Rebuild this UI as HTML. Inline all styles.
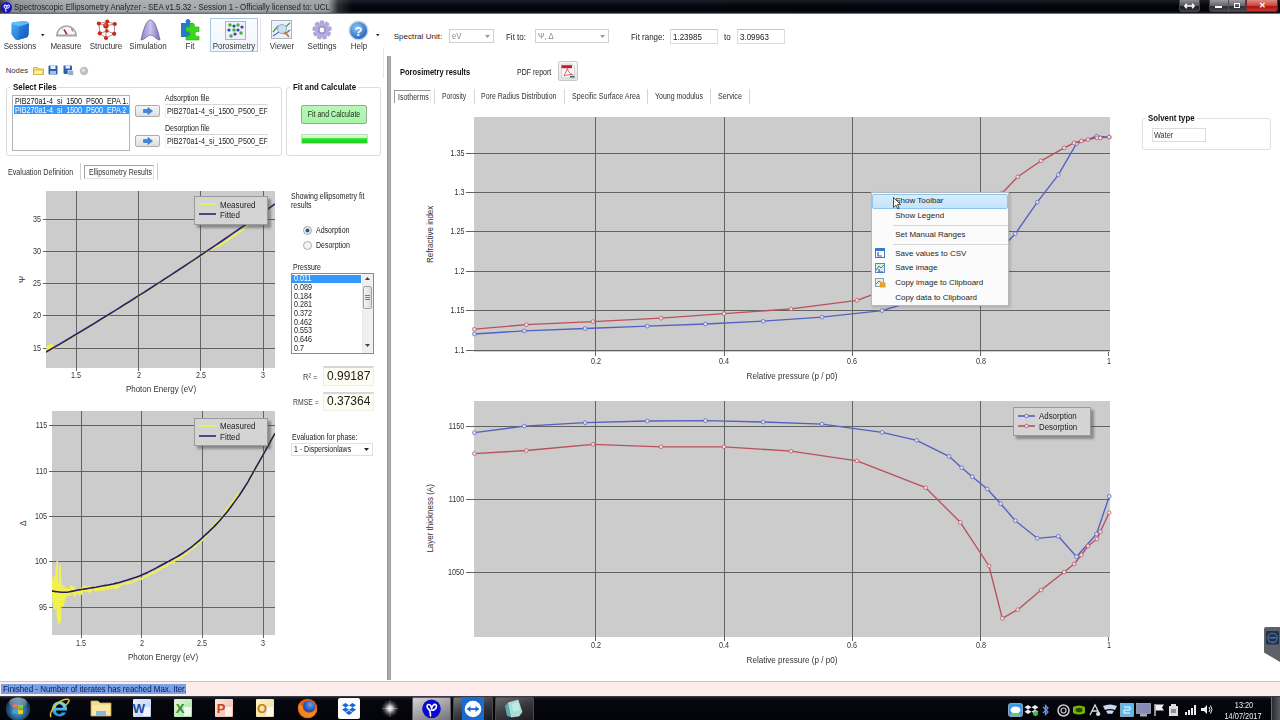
<!DOCTYPE html>
<html><head><meta charset="utf-8"><title>SEA</title>
<style>
html,body{margin:0;padding:0;width:1280px;height:720px;overflow:hidden;background:#fff;}
body{position:relative;font-family:"Liberation Sans",sans-serif;}
.t{position:absolute;white-space:nowrap;font-family:"Liberation Sans",sans-serif;}
.r{position:absolute;}
svg.r{overflow:visible;}
</style></head><body>
<div class="r" style="left:0px;top:0px;width:1280px;height:14px;background:linear-gradient(90deg,#30343a 0px,#8a8e92 12px,#a2a6a8 60px,#a6aaac 220px,#9a9ea0 328px,#2a2c34 338px,#04050f 352px,#02030c 100%);"></div>
<div class="r" style="left:0px;top:0px;width:1280px;height:6px;background:linear-gradient(180deg,rgba(255,255,255,0.10),rgba(255,255,255,0));"></div>
<div class="r" style="left:0px;top:11px;width:1280px;height:3px;background:linear-gradient(180deg,rgba(0,0,0,0),rgba(60,60,66,0.6));"></div>
<div class="r" style="left:0px;top:13px;width:1280px;height:1px;background:#707074;"></div>
<div class="r" style="left:1px;top:1.5px;width:11px;height:11px;border-radius:50%;background:radial-gradient(circle at 50% 45%,#1a18c8 50%,#0c0a90 78%,#6a6ae0);"></div>
<svg class="r" style="left:1px;top:2px" width="11" height="11" viewBox="0 0 11 11"><path d="M5 9.5 C5 7.2 4.7 6.2 3.6 5.4 C2.8 4.7 3 3.3 4 3.1 C5.1 2.9 5.6 4.2 5.6 5.6 C5.9 3.9 6.9 2.8 7.8 3.1 C8.7 3.4 8.6 5 7.3 5.9 C6.7 6.3 5.9 6.3 5.5 6.2" stroke="#f0f0ff" stroke-width="1.1" fill="none" stroke-linecap="round"/></svg>
<div class="t" style="left:14px;transform-origin:0 50%;top:1.53px;font-size:8.61px;line-height:10.33px;color:#1e1e1e;font-weight:400;transform:scaleX(0.9174);">Spectroscopic Ellipsometry Analyzer - SEA v1.5.32 - Session 1 - Officially licensed to: UCL</div>
<div class="r" style="left:1179px;top:0px;width:21px;height:12px;background:linear-gradient(180deg,#8a8a90,#505058 55%,#1a1a22 60%,#3a3a44);border:1px solid #444;border-top:none;border-radius:0 0 3px 3px;box-sizing:border-box;"></div>
<svg class="r" style="left:1184px;top:3px" width="11" height="6"><path d="M0.5 3H10.5M0.5 3L3 0.8M0.5 3L3 5.2M10.5 3L8 0.8M10.5 3L8 5.2" stroke="#fff" stroke-width="1.4" fill="none"/></svg>
<div class="r" style="left:1209px;top:0px;width:37px;height:12px;background:linear-gradient(180deg,#9a9aa0,#606068 55%,#2a2a32 60%,#4a4a54);border:1px solid #444;border-top:none;border-radius:0 0 0 3px;box-sizing:border-box;"></div>
<div class="r" style="left:1228px;top:0px;width:1px;height:12px;background:#555;"></div>
<div class="r" style="left:1215px;top:6px;width:7px;height:2px;background:#fff;"></div>
<div class="r" style="left:1234px;top:3px;width:6px;height:5px;border:1.3px solid #fff;box-sizing:border-box;"></div>
<div class="r" style="left:1246px;top:0px;width:32px;height:12px;background:linear-gradient(180deg,#e08a80,#c84a40 50%,#b01010 60%,#c83a30);border:1px solid #6a2a2a;border-top:none;border-radius:0 0 3px 0;box-sizing:border-box;"></div>
<div class="t" style="left:1062px;width:400px;text-align:center;transform-origin:50% 50%;top:0.70px;font-size:8.00px;line-height:9.60px;color:#fff;font-weight:700;">&#x2715;</div>
<div class="r" style="left:210px;top:18px;width:48px;height:34px;border:1px solid #a9c6e6;background:linear-gradient(180deg,#fbfdff,#eef5fc);box-sizing:border-box;"></div>
<div class="r" style="left:260px;top:18px;width:1px;height:34px;background:#e4e8ee;"></div>
<div class="t" style="left:-180px;width:400px;text-align:center;transform-origin:50% 50%;top:40.52px;font-size:8.64px;line-height:10.37px;color:#333;font-weight:400;transform:scaleX(0.9259);">Sessions</div>
<div class="t" style="left:-133.6px;width:400px;text-align:center;transform-origin:50% 50%;top:40.52px;font-size:8.64px;line-height:10.37px;color:#333;font-weight:400;transform:scaleX(0.9259);">Measure</div>
<div class="t" style="left:-93.7px;width:400px;text-align:center;transform-origin:50% 50%;top:40.52px;font-size:8.64px;line-height:10.37px;color:#333;font-weight:400;transform:scaleX(0.9259);">Structure</div>
<div class="t" style="left:-52.400000000000006px;width:400px;text-align:center;transform-origin:50% 50%;top:40.52px;font-size:8.64px;line-height:10.37px;color:#333;font-weight:400;transform:scaleX(0.9259);">Simulation</div>
<div class="t" style="left:-9.800000000000011px;width:400px;text-align:center;transform-origin:50% 50%;top:40.52px;font-size:8.64px;line-height:10.37px;color:#333;font-weight:400;transform:scaleX(0.9259);">Fit</div>
<div class="t" style="left:34px;width:400px;text-align:center;transform-origin:50% 50%;top:40.52px;font-size:8.64px;line-height:10.37px;color:#333;font-weight:400;transform:scaleX(0.9259);">Porosimetry</div>
<div class="t" style="left:81.60000000000002px;width:400px;text-align:center;transform-origin:50% 50%;top:40.52px;font-size:8.64px;line-height:10.37px;color:#333;font-weight:400;transform:scaleX(0.9259);">Viewer</div>
<div class="t" style="left:121.5px;width:400px;text-align:center;transform-origin:50% 50%;top:40.52px;font-size:8.64px;line-height:10.37px;color:#333;font-weight:400;transform:scaleX(0.9259);">Settings</div>
<div class="t" style="left:158.7px;width:400px;text-align:center;transform-origin:50% 50%;top:40.52px;font-size:8.64px;line-height:10.37px;color:#333;font-weight:400;transform:scaleX(0.9259);">Help</div>
<svg class="r" style="left:41px;top:33.5px" width="4" height="2.5"><path d="M0 0H3.5L1.75 2.2Z" fill="#222"/></svg>
<svg class="r" style="left:376px;top:33.5px" width="4" height="2.5"><path d="M0 0H3.5L1.75 2.2Z" fill="#222"/></svg>
<svg class="r" style="left:10px;top:20px" width="21" height="21" viewBox="0 0 21 21"><defs><linearGradient id="cb1" x1="0" y1="0" x2="1" y2="1"><stop offset="0" stop-color="#4ab0f4"/><stop offset="1" stop-color="#1468d0"/></linearGradient><linearGradient id="cb2" x1="0" y1="0" x2="1" y2="1"><stop offset="0" stop-color="#2a80e0"/><stop offset="1" stop-color="#1050b0"/></linearGradient></defs>
<path d="M1.5 4 Q1.5 2.5 3 2.3 L14 1 Q18.5 1.5 19 3.5 L18.5 15 Q18 16.5 16.5 17.5 L7.5 20 Q6 20.3 5 19 L2 15 Q1.2 14 1.3 12.5 Z" fill="url(#cb1)"/>
<path d="M14.5 4 L19 3.5 L18.5 15 Q18 16.5 16.5 17.5 L8 20 L9 6.5 Z" fill="url(#cb2)" opacity="0.75"/>
<path d="M1.5 4 Q1.5 2.5 3 2.3 L14 1 Q18.5 1.5 19 3.5 L9 6.5 Z" fill="#6ac4fa" opacity="0.8"/></svg>
<svg class="r" style="left:55px;top:22px" width="23" height="15" viewBox="0 0 23 15"><path d="M2 13.5 A9.5 9.5 0 0 1 21 13.5 Z" fill="#fafafa" stroke="#a4a4a4" stroke-width="1.6"/>
<path d="M12 12.5 L9 7.5" stroke="#a02838" stroke-width="1.5"/><path d="M16.5 6.5 L17.8 9.5" stroke="#c04858" stroke-width="1"/><path d="M7 6.5 L8 8" stroke="#d08090" stroke-width="0.8"/>
<rect x="1" y="12.6" width="21" height="1.8" fill="#a8a8a8"/></svg>
<svg class="r" style="left:96px;top:19px" width="22" height="22" viewBox="0 0 22 22"><g stroke="#a08080" stroke-width="0.9" fill="none"><path d="M3 4.5 L11.3 2.6 L18.8 5 L18.2 14.8 L10 19 L3.8 14.3 Z M3 4.5 L9.9 6.8 L18.8 5 M9.9 6.8 L10 19 M3.8 14.3 L10.9 12 L18.2 14.8 M11.3 2.6 L10.9 12"/></g>
<g fill="#c82818"><circle cx="2.9" cy="4.5" r="2.1"/><circle cx="11.3" cy="2.6" r="2"/><circle cx="18.8" cy="5" r="2.1"/><circle cx="18.2" cy="14.8" r="2.1"/><circle cx="10" cy="19" r="2.1"/><circle cx="3.8" cy="14.3" r="2.1"/><circle cx="10.9" cy="12" r="1.7"/></g><circle cx="9.9" cy="6.8" r="2.7" fill="#e02010"/><circle cx="9.3" cy="6" r="0.9" fill="#f87060"/></svg>
<svg class="r" style="left:140px;top:19px" width="21" height="22" viewBox="0 0 21 22"><defs><linearGradient id="sg1" x1="0" y1="0" x2="1" y2="0"><stop offset="0" stop-color="#8a82c8"/><stop offset="0.5" stop-color="#c8c4ec"/><stop offset="1" stop-color="#7a70b8"/></linearGradient></defs>
<path d="M1 21 C3 12 6 1 10.5 1 C15 1 18 12 20 21 C16 21 14 16 10.5 16 C7 16 5 21 1 21 Z" fill="url(#sg1)" stroke="#6a62a8" stroke-width="0.8"/></svg>
<svg class="r" style="left:179px;top:19px" width="22" height="22" viewBox="0 0 22 22"><path d="M2 4 h5 a2.5 2.5 0 1 1 4 0 h2 v14 h-11 Z" fill="#2a78c8"/>
<path d="M7 8 h4 a2.5 2.5 0 1 1 4 0 h5 v5 a2.5 2.5 0 1 0 0 4 v4 h-13 v-4 a2.5 2.5 0 1 0 0 -4 Z" fill="#3ad818" stroke="#28a810" stroke-width="0.6"/></svg>
<svg class="r" style="left:225px;top:21px" width="21" height="19" viewBox="0 0 21 19"><rect x="0.5" y="0.5" width="20" height="18" fill="#f0eef6" stroke="#b8b0c8"/>
<g fill="#40b040"><circle cx="5" cy="4" r="1.7"/><circle cx="13" cy="4" r="1.7"/><circle cx="9" cy="9" r="1.7"/><circle cx="16" cy="12" r="1.7"/><circle cx="6" cy="15" r="1.7"/></g>
<g fill="#2a4aa8"><circle cx="9" cy="5" r="1.6"/><circle cx="17" cy="6" r="1.6"/><circle cx="4" cy="9" r="1.6"/><circle cx="13" cy="9" r="1.6"/><circle cx="10" cy="13" r="1.6"/></g></svg>
<svg class="r" style="left:271px;top:20px" width="22" height="20" viewBox="0 0 22 20"><rect x="0.5" y="0.5" width="20" height="18" fill="#eef2f6" stroke="#a8b4c4"/>
<path d="M2 12 L7 6 L12 9 L19 3" stroke="#40a040" stroke-width="1.3" fill="none"/><path d="M2 16 L8 12 L14 14 L19 10" stroke="#4060c0" stroke-width="1.1" fill="none"/>
<circle cx="11" cy="9" r="4.5" fill="#c8e0f0" stroke="#90b0c8" stroke-width="1"/><path d="M14 12 L18 17" stroke="#e07820" stroke-width="2"/></svg>
<svg class="r" style="left:312px;top:20px" width="20" height="20" viewBox="0 0 20 20"><rect x="7.7" y="0.40000000000000036" width="4.6" height="5" rx="1.2" fill="#b0a8dc" transform="rotate(0 10 10)"/><rect x="7.7" y="0.40000000000000036" width="4.6" height="5" rx="1.2" fill="#b0a8dc" transform="rotate(40 10 10)"/><rect x="7.7" y="0.40000000000000036" width="4.6" height="5" rx="1.2" fill="#b0a8dc" transform="rotate(80 10 10)"/><rect x="7.7" y="0.40000000000000036" width="4.6" height="5" rx="1.2" fill="#b0a8dc" transform="rotate(120 10 10)"/><rect x="7.7" y="0.40000000000000036" width="4.6" height="5" rx="1.2" fill="#b0a8dc" transform="rotate(160 10 10)"/><rect x="7.7" y="0.40000000000000036" width="4.6" height="5" rx="1.2" fill="#b0a8dc" transform="rotate(200 10 10)"/><rect x="7.7" y="0.40000000000000036" width="4.6" height="5" rx="1.2" fill="#b0a8dc" transform="rotate(240 10 10)"/><rect x="7.7" y="0.40000000000000036" width="4.6" height="5" rx="1.2" fill="#b0a8dc" transform="rotate(280 10 10)"/><rect x="7.7" y="0.40000000000000036" width="4.6" height="5" rx="1.2" fill="#b0a8dc" transform="rotate(320 10 10)"/><circle cx="10" cy="10" r="6.8" fill="#b4acde"/><circle cx="10" cy="10" r="4.2" fill="#9a90cc"/><circle cx="10" cy="10" r="2.4" fill="#fff"/></svg>
<svg class="r" style="left:348px;top:20px" width="21" height="21" viewBox="0 0 21 21"><defs><radialGradient id="hg1" cx="0.4" cy="0.35" r="0.7"><stop offset="0" stop-color="#8cc8f8"/><stop offset="1" stop-color="#1a5ab8"/></radialGradient></defs>
<circle cx="10.5" cy="10.5" r="9.3" fill="url(#hg1)" stroke="#c8d4e0" stroke-width="1.4"/>
<text x="10.5" y="15.5" font-family="Liberation Sans" font-weight="700" font-size="13" fill="#fff" text-anchor="middle">?</text></svg>
<div class="t" style="left:393.7px;transform-origin:0 50%;top:31.80px;font-size:8.00px;line-height:9.60px;color:#222;font-weight:400;letter-spacing:0.05px">Spectral Unit:</div>
<div class="r" style="left:449px;top:29px;width:45px;height:14px;border:1px solid #d0d0d0;background:#fff;box-sizing:border-box;"></div><div class="t" style="left:452px;transform-origin:0 50%;top:31.45px;font-size:8.58px;line-height:10.30px;color:#8a8a8a;font-weight:400;transform:scaleX(0.9091);">eV</div><svg class="r" style="left:485px;top:34.5px" width="5" height="3"><path d="M0 0H5L2.5 3Z" fill="#999"/></svg>
<div class="t" style="left:506px;transform-origin:0 50%;top:31.56px;font-size:8.40px;line-height:10.08px;color:#222;font-weight:400;transform:scaleX(0.9524);">Fit to:</div>
<div class="r" style="left:535px;top:29px;width:74px;height:14px;border:1px solid #d0d0d0;background:#fff;box-sizing:border-box;"></div><div class="t" style="left:538px;transform-origin:0 50%;top:31.45px;font-size:8.58px;line-height:10.30px;color:#8a8a8a;font-weight:400;transform:scaleX(0.9091);">&#936;, &#916;</div><svg class="r" style="left:600px;top:34.5px" width="5" height="3"><path d="M0 0H5L2.5 3Z" fill="#999"/></svg>
<div class="t" style="left:631px;transform-origin:0 50%;top:31.56px;font-size:8.40px;line-height:10.08px;color:#222;font-weight:400;transform:scaleX(0.9524);">Fit range:</div>
<div class="r" style="left:670px;top:29px;width:48px;height:15px;border:1px solid #dcdcdc;border-top-color:#c4c4c4;background:#fff;box-sizing:border-box;"></div>
<div class="t" style="left:673px;transform-origin:0 50%;top:31.52px;font-size:8.80px;line-height:10.56px;color:#222;font-weight:400;transform:scaleX(0.9091);">1.23985</div>
<div class="t" style="left:724px;transform-origin:0 50%;top:31.56px;font-size:8.40px;line-height:10.08px;color:#222;font-weight:400;transform:scaleX(0.9524);">to</div>
<div class="r" style="left:737px;top:29px;width:48px;height:15px;border:1px solid #dcdcdc;border-top-color:#c4c4c4;background:#fff;box-sizing:border-box;"></div>
<div class="t" style="left:740px;transform-origin:0 50%;top:31.52px;font-size:8.80px;line-height:10.56px;color:#222;font-weight:400;transform:scaleX(0.9091);">3.09963</div>
<div class="r" style="left:387px;top:56px;width:4px;height:624px;background:linear-gradient(90deg,#8a8a8a,#b4b4b4 50%,#9a9a9a);"></div>
<div class="r" style="left:383px;top:48px;width:1px;height:30px;background:#e6e6e6;"></div>
<div class="t" style="left:5.8px;transform-origin:0 50%;top:66.38px;font-size:7.70px;line-height:9.24px;color:#333;font-weight:400;">Nodes</div>
<svg class="r" style="left:33px;top:65px" width="11" height="10" viewBox="0 0 11 10"><path d="M0.5 2.5 h4 l1 1.5 h5 v5.5 h-10 Z" fill="#f8e060" stroke="#c8a830" stroke-width="0.8"/><path d="M1.5 5 h9 l-1 4.5 h-9 Z" fill="#fff0a0" stroke="#c8a830" stroke-width="0.6"/></svg>
<svg class="r" style="left:48px;top:65px" width="10" height="10" viewBox="0 0 10 10"><rect x="0.5" y="0.5" width="9" height="9" rx="1" fill="#2a60b0"/><rect x="2.5" y="0.5" width="5" height="3.5" fill="#e8f0f8"/><rect x="2" y="6" width="6" height="3.5" fill="#a8c0e0"/></svg>
<svg class="r" style="left:63px;top:65px" width="11" height="11" viewBox="0 0 11 11"><rect x="0.5" y="0.5" width="8.5" height="8.5" rx="1" fill="#2a60b0"/><rect x="2.5" y="0.5" width="4.5" height="3" fill="#e8f0f8"/><rect x="5" y="5.5" width="5.5" height="5" fill="#9aaac8" stroke="#fff" stroke-width="0.6"/></svg>
<svg class="r" style="left:79px;top:66px" width="10" height="10" viewBox="0 0 10 10"><circle cx="5" cy="5" r="4.2" fill="#c0c0c0"/><circle cx="4.3" cy="4.3" r="1.8" fill="#e0e0e0"/></svg>
<div class="r" style="left:6px;top:87px;width:276px;height:69px;border:1px solid #dcdcdc;border-radius:3px;box-sizing:border-box;"></div>
<div class="r" style="left:10px;top:82px;width:48px;height:9px;background:#fff;"></div>
<div class="t" style="left:12.5px;transform-origin:0 50%;top:82.05px;font-size:8.59px;line-height:10.30px;color:#111;font-weight:700;transform:scaleX(0.9259);">Select Files</div>
<div class="r" style="left:12px;top:95px;width:118px;height:56px;border:1px solid #b4b4b4;background:#fff;box-sizing:border-box;"></div>
<div class="t" style="left:15px;transform-origin:0 50%;top:95.73px;font-size:8.78px;line-height:10.54px;color:#111;font-weight:400;transform:scaleX(0.8197);width:139px;height:14px;overflow:hidden">PIB270a1-4_si_1500_P500_EPA 1.</div>
<div class="r" style="left:14px;top:105px;width:115px;height:9px;background:#3399ff;"></div>
<div class="t" style="left:15px;transform-origin:0 50%;top:104.73px;font-size:8.78px;line-height:10.54px;color:#fff;font-weight:400;transform:scaleX(0.8197);width:139px;height:14px;overflow:hidden">PIB270a1-4_si_1500_P500_EPA 2</div>
<div class="r" style="left:135px;top:105px;width:25px;height:12px;border:1px solid #acacac;border-radius:2px;background:linear-gradient(180deg,#f6f6f6,#dedede);box-sizing:border-box;"></div><svg class="r" style="left:142.5px;top:107.0px" width="10" height="8" viewBox="0 0 10 8"><path d="M0.5 2.5 H5 V0.5 L9.5 4 L5 7.5 V5.5 H0.5 Z" fill="#3c8ae0" stroke="#2a68b8" stroke-width="0.6"/></svg>
<div class="r" style="left:135px;top:135px;width:25px;height:12px;border:1px solid #acacac;border-radius:2px;background:linear-gradient(180deg,#f6f6f6,#dedede);box-sizing:border-box;"></div><svg class="r" style="left:142.5px;top:137.0px" width="10" height="8" viewBox="0 0 10 8"><path d="M0.5 2.5 H5 V0.5 L9.5 4 L5 7.5 V5.5 H0.5 Z" fill="#3c8ae0" stroke="#2a68b8" stroke-width="0.6"/></svg>
<div class="t" style="left:164.7px;transform-origin:0 50%;top:92.88px;font-size:8.54px;line-height:10.25px;color:#222;font-weight:400;transform:scaleX(0.8197);">Adsorption file</div>
<div class="r" style="left:165px;top:104px;width:103px;height:14px;border:1px solid #f0f0f0;border-top-color:#d8d8d8;background:#fff;box-sizing:border-box;"></div>
<div class="t" style="left:167px;transform-origin:0 50%;top:106.23px;font-size:8.78px;line-height:10.54px;color:#222;font-weight:400;transform:scaleX(0.8197);width:122px;height:14px;overflow:hidden">PIB270a1-4_si_1500_P500_EF</div>
<div class="t" style="left:164.7px;transform-origin:0 50%;top:123.18px;font-size:8.54px;line-height:10.25px;color:#222;font-weight:400;transform:scaleX(0.8197);">Desorption file</div>
<div class="r" style="left:165px;top:134px;width:103px;height:14px;border:1px solid #f0f0f0;border-top-color:#d8d8d8;background:#fff;box-sizing:border-box;"></div>
<div class="t" style="left:167px;transform-origin:0 50%;top:135.73px;font-size:8.78px;line-height:10.54px;color:#222;font-weight:400;transform:scaleX(0.8197);width:122px;height:14px;overflow:hidden">PIB270a1-4_si_1500_P500_EF</div>
<div class="r" style="left:286px;top:87px;width:95px;height:69px;border:1px solid #dcdcdc;border-radius:3px;box-sizing:border-box;"></div>
<div class="r" style="left:290px;top:82px;width:68px;height:9px;background:#fff;"></div>
<div class="t" style="left:292.5px;transform-origin:0 50%;top:82.08px;font-size:8.53px;line-height:10.24px;color:#111;font-weight:700;transform:scaleX(0.9259);">Fit and Calculate</div>
<div class="r" style="left:301px;top:105px;width:66px;height:19px;border:1px solid #9aa89a;border-radius:2px;background:linear-gradient(180deg,#b8f8b8,#a8f4a8);box-sizing:border-box;"></div>
<div class="t" style="left:134px;width:400px;text-align:center;transform-origin:50% 50%;top:109.18px;font-size:8.54px;line-height:10.25px;color:#1a2a1a;font-weight:400;transform:scaleX(0.8197);">Fit and Calculate</div>
<div class="r" style="left:301px;top:134px;width:67px;height:10px;border:1px solid #b8dcb8;border-radius:1px;background:linear-gradient(180deg,#e4fce4,#c0f4c0 40%,#28e028 45%,#18e018 80%,#30c030);box-sizing:border-box;"></div>
<div class="t" style="left:8.4px;transform-origin:0 50%;top:166.97px;font-size:8.72px;line-height:10.47px;color:#333;font-weight:400;transform:scaleX(0.8197);">Evaluation Definition</div>
<div class="r" style="left:80px;top:163px;width:1px;height:17px;background:#d0d0d0;"></div>
<div class="r" style="left:84px;top:165px;width:70px;height:14px;border:1px solid #a0a0a0;border-bottom-color:#e4e4e4;border-right-color:#e4e4e4;box-sizing:border-box;background:#fff;"></div>
<div class="t" style="left:88.8px;transform-origin:0 50%;top:167.31px;font-size:8.48px;line-height:10.17px;color:#333;font-weight:400;transform:scaleX(0.8197);">Ellipsometry Results</div>
<div class="r" style="left:157px;top:163px;width:1px;height:17px;background:#d0d0d0;"></div>
<div class="r" style="left:46px;top:191px;width:229px;height:177px;background:#cccccc;"></div><svg class="r" style="left:0;top:0" width="1280" height="720"><line x1="76.5" y1="191" x2="76.5" y2="368" stroke="#636363" stroke-width="1"/><line x1="76.5" y1="368" x2="76.5" y2="371" stroke="#636363" stroke-width="1"/><line x1="138.5" y1="191" x2="138.5" y2="368" stroke="#636363" stroke-width="1"/><line x1="138.5" y1="368" x2="138.5" y2="371" stroke="#636363" stroke-width="1"/><line x1="200.5" y1="191" x2="200.5" y2="368" stroke="#636363" stroke-width="1"/><line x1="200.5" y1="368" x2="200.5" y2="371" stroke="#636363" stroke-width="1"/><line x1="263.5" y1="191" x2="263.5" y2="368" stroke="#636363" stroke-width="1"/><line x1="263.5" y1="368" x2="263.5" y2="371" stroke="#636363" stroke-width="1"/><line x1="43" y1="219.5" x2="275" y2="219.5" stroke="#636363" stroke-width="1"/><line x1="43" y1="251.5" x2="275" y2="251.5" stroke="#636363" stroke-width="1"/><line x1="43" y1="283.5" x2="275" y2="283.5" stroke="#636363" stroke-width="1"/><line x1="43" y1="315.5" x2="275" y2="315.5" stroke="#636363" stroke-width="1"/><line x1="43" y1="348.5" x2="275" y2="348.5" stroke="#636363" stroke-width="1"/></svg><div class="t" style="left:-123.7px;width:400px;text-align:center;transform-origin:50% 50%;top:370.10px;font-size:9.00px;line-height:10.80px;color:#333;font-weight:400;transform:scaleX(0.8000);">1.5</div><div class="t" style="left:-61.435px;width:400px;text-align:center;transform-origin:50% 50%;top:370.10px;font-size:9.00px;line-height:10.80px;color:#333;font-weight:400;transform:scaleX(0.8000);">2</div><div class="t" style="left:0.8299999999999841px;width:400px;text-align:center;transform-origin:50% 50%;top:370.10px;font-size:9.00px;line-height:10.80px;color:#333;font-weight:400;transform:scaleX(0.8000);">2.5</div><div class="t" style="left:63.09500000000003px;width:400px;text-align:center;transform-origin:50% 50%;top:370.10px;font-size:9.00px;line-height:10.80px;color:#333;font-weight:400;transform:scaleX(0.8000);">3</div><div class="t" style="right:1239px;transform-origin:100% 50%;top:214.00px;font-size:9.00px;line-height:10.80px;color:#333;font-weight:400;transform:scaleX(0.8000);">35</div><div class="t" style="right:1239px;transform-origin:100% 50%;top:246.15px;font-size:9.00px;line-height:10.80px;color:#333;font-weight:400;transform:scaleX(0.8000);">30</div><div class="t" style="right:1239px;transform-origin:100% 50%;top:278.30px;font-size:9.00px;line-height:10.80px;color:#333;font-weight:400;transform:scaleX(0.8000);">25</div><div class="t" style="right:1239px;transform-origin:100% 50%;top:310.45px;font-size:9.00px;line-height:10.80px;color:#333;font-weight:400;transform:scaleX(0.8000);">20</div><div class="t" style="right:1239px;transform-origin:100% 50%;top:342.60px;font-size:9.00px;line-height:10.80px;color:#333;font-weight:400;transform:scaleX(0.8000);">15</div>
<svg class="r" style="left:0;top:0" width="1280" height="720"><defs><clipPath id="cl1"><rect x="46" y="191" width="229" height="177"/></clipPath></defs><g clip-path="url(#cl1)"><polyline points="45.0,353.1 47.5,351.7 50.0,350.2 52.5,348.8 55.0,347.3 57.5,345.8 60.0,344.4 62.5,342.9 65.0,341.4 67.5,339.9 70.0,338.4 72.5,336.9 75.0,335.4 77.5,334.0 80.0,332.5 82.5,330.9 85.0,329.4 87.5,327.9 90.0,326.4 92.5,324.9 95.0,323.4 97.5,321.8 100.0,320.3 102.5,318.8 105.0,317.3 107.5,315.7 110.0,314.2 112.5,312.6 115.0,311.1 117.5,309.5 120.0,308.0 122.5,306.4 125.0,304.8 127.5,303.3 130.0,301.7 132.5,300.1 135.0,298.5 137.5,297.0 140.0,295.4 142.5,293.8 145.0,292.2 147.5,290.6 150.0,289.0 152.5,287.4 155.0,285.8 157.5,284.2 160.0,282.6 162.5,280.9 165.0,279.3 167.5,277.7 170.0,276.1 172.5,274.4 175.0,272.8 177.5,271.1 180.0,269.5 182.5,267.9 185.0,266.2 187.5,264.6 190.0,262.9 192.5,261.2 195.0,259.6 197.5,257.9 200.0,256.2 202.5,254.6 205.0,252.9 207.5,251.3 210.0,249.8 212.5,248.5 215.0,247.3 217.5,246.1 220.0,244.9 222.5,243.4 225.0,241.9 227.5,240.2 230.0,238.5 232.5,236.8 235.0,235.0 237.5,233.3 240.0,231.5 242.5,229.6 245.0,227.5 247.5,225.3 250.0,223.0 252.5,220.8 255.0,218.7 257.5,216.8 260.0,215.0 262.5,213.3 265.0,211.5 267.5,209.7 270.0,208.0 272.5,206.2 275.0,204.4" fill="none" stroke="#f2f24a" stroke-width="1.8" stroke-linejoin="round" /><ellipse cx="50" cy="347.5" rx="4" ry="3" fill="#f2f24a" transform="rotate(-35 50 347.5)"/><polyline points="45.0,352.6 50.0,349.7 55.0,346.8 60.0,343.9 65.0,340.9 70.0,337.9 75.0,334.9 80.0,331.9 85.0,328.9 90.0,325.9 95.0,322.9 100.0,319.8 105.0,316.8 110.0,313.7 115.0,310.6 120.0,307.5 125.0,304.3 130.0,301.2 135.0,298.0 140.0,294.9 145.0,291.7 150.0,288.5 155.0,285.3 160.0,282.1 165.0,278.8 170.0,275.6 175.0,272.3 180.0,269.0 185.0,265.7 190.0,262.4 195.0,259.1 200.0,255.7 205.0,252.4 210.0,249.0 215.0,245.6 220.0,242.2 225.0,238.8 230.0,235.4 235.0,231.9 240.0,228.5 245.0,225.0 250.0,221.5 255.0,218.1 260.0,214.5 265.0,211.0 270.0,207.5 275.0,203.9" fill="none" stroke="#2c2474" stroke-width="1.7" stroke-linejoin="round" /></g></svg>
<div class="r" style="left:197px;top:199px;width:74px;height:29px;background:rgba(60,60,60,0.45);filter:blur(1px);"></div><div class="r" style="left:194px;top:196px;width:74px;height:29px;background:#d4d4d4;border:1px solid #9a9a9a;box-sizing:border-box;"></div><svg class="r" style="left:199px;top:201px" width="18" height="6" viewBox="0 0 18 6"><line x1="0" y1="3" x2="17" y2="3" stroke="#f2f24a" stroke-width="1.6"/></svg><div class="t" style="left:220px;transform-origin:0 50%;top:198.64px;font-size:9.76px;line-height:11.71px;color:#222;font-weight:400;transform:scaleX(0.8197);">Measured</div><svg class="r" style="left:199px;top:211px" width="18" height="6" viewBox="0 0 18 6"><line x1="0" y1="3" x2="17" y2="3" stroke="#2c2474" stroke-width="1.6"/></svg><div class="t" style="left:220px;transform-origin:0 50%;top:208.64px;font-size:9.76px;line-height:11.71px;color:#222;font-weight:400;transform:scaleX(0.8197);">Fitted</div>
<div class="t" style="left:-39.5px;width:400px;text-align:center;transform-origin:50% 50%;top:382.94px;font-size:9.76px;line-height:11.71px;color:#333;font-weight:400;transform:scaleX(0.8197);">Photon Energy (eV)</div>
<div class="t" style="left:-177.7px;width:400px;text-align:center;transform-origin:50% 50%;top:274.28px;font-size:9.03px;line-height:10.84px;color:#333;font-weight:400;transform:rotate(-90deg) scaleX(0.9524);">&#936;</div>
<div class="r" style="left:52px;top:411px;width:223px;height:224px;background:#cccccc;"></div><svg class="r" style="left:0;top:0" width="1280" height="720"><line x1="81.5" y1="411" x2="81.5" y2="635" stroke="#636363" stroke-width="1"/><line x1="81.5" y1="635" x2="81.5" y2="638" stroke="#636363" stroke-width="1"/><line x1="141.5" y1="411" x2="141.5" y2="635" stroke="#636363" stroke-width="1"/><line x1="141.5" y1="635" x2="141.5" y2="638" stroke="#636363" stroke-width="1"/><line x1="202.5" y1="411" x2="202.5" y2="635" stroke="#636363" stroke-width="1"/><line x1="202.5" y1="635" x2="202.5" y2="638" stroke="#636363" stroke-width="1"/><line x1="263.5" y1="411" x2="263.5" y2="635" stroke="#636363" stroke-width="1"/><line x1="263.5" y1="635" x2="263.5" y2="638" stroke="#636363" stroke-width="1"/><line x1="49" y1="425.5" x2="275" y2="425.5" stroke="#636363" stroke-width="1"/><line x1="49" y1="471.5" x2="275" y2="471.5" stroke="#636363" stroke-width="1"/><line x1="49" y1="516.5" x2="275" y2="516.5" stroke="#636363" stroke-width="1"/><line x1="49" y1="561.5" x2="275" y2="561.5" stroke="#636363" stroke-width="1"/><line x1="49" y1="607.5" x2="275" y2="607.5" stroke="#636363" stroke-width="1"/></svg><div class="t" style="left:-119.0px;width:400px;text-align:center;transform-origin:50% 50%;top:638.40px;font-size:9.00px;line-height:10.80px;color:#333;font-weight:400;transform:scaleX(0.8000);">1.5</div><div class="t" style="left:-58.30000000000001px;width:400px;text-align:center;transform-origin:50% 50%;top:638.40px;font-size:9.00px;line-height:10.80px;color:#333;font-weight:400;transform:scaleX(0.8000);">2</div><div class="t" style="left:2.4000000000000057px;width:400px;text-align:center;transform-origin:50% 50%;top:638.40px;font-size:9.00px;line-height:10.80px;color:#333;font-weight:400;transform:scaleX(0.8000);">2.5</div><div class="t" style="left:63.10000000000002px;width:400px;text-align:center;transform-origin:50% 50%;top:638.40px;font-size:9.00px;line-height:10.80px;color:#333;font-weight:400;transform:scaleX(0.8000);">3</div><div class="t" style="right:1232.5px;transform-origin:100% 50%;top:420.40px;font-size:9.00px;line-height:10.80px;color:#333;font-weight:400;transform:scaleX(0.8000);">115</div><div class="t" style="right:1232.5px;transform-origin:100% 50%;top:465.70px;font-size:9.00px;line-height:10.80px;color:#333;font-weight:400;transform:scaleX(0.8000);">110</div><div class="t" style="right:1232.5px;transform-origin:100% 50%;top:511.00px;font-size:9.00px;line-height:10.80px;color:#333;font-weight:400;transform:scaleX(0.8000);">105</div><div class="t" style="right:1232.5px;transform-origin:100% 50%;top:556.30px;font-size:9.00px;line-height:10.80px;color:#333;font-weight:400;transform:scaleX(0.8000);">100</div><div class="t" style="right:1232.5px;transform-origin:100% 50%;top:601.60px;font-size:9.00px;line-height:10.80px;color:#333;font-weight:400;transform:scaleX(0.8000);">95</div>
<svg class="r" style="left:0;top:0" width="1280" height="720"><defs><clipPath id="cl2"><rect x="52" y="411" width="223" height="224"/></clipPath></defs><g clip-path="url(#cl2)"><polyline points="51.7,585.3 51.9,592.5 52.1,588.2 52.4,594.1 52.6,594.8 52.8,579.6 53.0,577.6 53.2,601.6 53.5,584.1 53.7,583.0 53.9,608.3 54.1,590.6 54.3,604.1 54.6,590.8 54.8,597.3 55.0,576.9 55.2,597.8 55.4,609.1 55.7,592.9 55.9,604.3 56.1,601.1 56.3,567.3 56.5,607.1 56.8,597.5 57.0,579.3 57.2,561.3 57.4,616.6 57.6,590.1 57.9,607.4 58.1,619.1 58.3,607.5 58.5,622.7 58.7,584.4 59.0,614.0 59.2,588.2 59.4,623.1 59.6,618.6 59.8,564.9 60.1,568.2 60.3,574.2 60.5,620.8 60.7,588.6 60.9,599.4 61.2,581.9 61.4,592.7 61.6,587.1 61.8,586.0 62.0,595.9 62.3,595.6 62.5,606.4 62.7,598.3 62.9,605.0 63.1,602.0 63.4,604.5 63.6,596.4 63.8,585.8 64.0,599.3 64.2,600.5 64.5,599.0 64.7,593.7 64.9,595.6 65.1,589.2 65.3,596.4 65.6,593.4 65.8,590.5 66.0,588.5 66.2,595.7 66.4,596.7 66.7,589.2 66.9,594.8 67.1,591.7 67.3,589.8 67.5,590.9 67.8,594.2 68.0,594.8 68.2,589.2 68.4,593.0 68.6,589.2 68.9,593.6 69.1,591.0 69.3,594.5 69.5,595.1 69.7,592.0 70.0,595.1 70.2,589.5 70.6,586.5 71.1,593.0 71.5,586.0 72.0,588.0 72.4,590.5 72.9,592.8 73.3,587.5 73.8,586.2 74.2,595.4 74.7,589.2 75.1,596.1 75.6,595.3 76.0,589.8 76.5,590.6 76.9,591.2 77.4,592.3 77.8,591.8 78.3,591.4 78.7,591.9 79.2,594.8 79.6,590.7 80.1,590.0 80.5,592.5 81.0,588.2 81.4,588.7 81.9,594.5 82.3,590.5 82.8,590.7 83.2,586.2 83.7,589.5 84.1,590.8 84.6,586.3 85.0,590.9 85.5,591.0 85.9,586.7 86.4,590.9 86.8,589.6 87.3,591.1 87.7,588.7 88.2,591.2 88.6,591.4 89.1,586.4 89.5,586.6 90.0,590.8 90.4,592.6 90.9,587.9 91.3,589.2 91.8,590.0 92.2,588.2 92.7,588.5 93.1,588.1 93.6,588.5 94.0,589.8 94.5,588.0 94.9,588.4 95.4,590.7 95.8,586.3 96.3,589.4 96.7,590.3 97.2,587.9 97.6,587.4 98.1,590.5 98.5,587.4 99.0,587.1 99.4,588.3 99.9,589.7 100.3,586.5 100.8,587.6 101.2,587.6 101.7,590.1 102.1,588.0 102.6,590.0 103.0,586.6 103.5,587.4 103.9,588.8 104.4,589.9 104.8,587.7 105.3,586.6 105.7,586.1 106.2,587.9 106.6,586.3 107.1,589.1 107.5,589.1 108.0,586.1 108.4,586.5 108.9,588.8 109.3,587.9 109.8,588.6 110.2,586.5 110.7,585.5 111.1,586.2 111.6,588.2 112.0,585.9 112.5,586.2 112.9,586.4 113.4,586.4 113.8,586.3 114.3,588.3 114.7,585.1 115.2,584.4 115.6,588.1 116.1,587.8 116.5,588.1 117.0,585.8 117.4,587.8 117.9,587.6 118.3,584.8 118.8,586.7 119.2,586.9 119.7,586.1 120.1,585.4 121.1,584.5 122.1,584.4 123.1,583.8 124.1,583.1 125.1,584.0 126.1,583.0 127.1,583.8 128.1,581.8 129.1,583.4 130.1,582.6 131.1,582.8 132.1,582.4 133.1,582.1 134.1,581.0 135.1,579.5 136.1,580.8 137.1,579.2 138.1,579.1 139.1,579.6 140.1,579.0 141.1,578.4 142.1,579.1 143.1,577.9 144.1,576.8 145.1,576.1 146.1,577.0 147.1,575.6 148.1,575.8 149.1,574.3 150.1,573.5 151.1,573.7 152.1,573.9 153.1,571.9 154.1,572.8 155.1,572.6 156.1,571.8 157.1,571.4 158.1,569.1 159.1,569.9 160.1,569.9 161.1,567.6 162.1,567.6 163.1,567.1 164.1,567.2 165.1,566.4 166.1,566.0 167.1,566.1 168.1,563.8 169.1,563.3 170.1,562.9 171.1,562.3 172.1,561.6 173.1,563.0 174.1,562.1 175.1,559.8 176.1,560.1 177.1,559.1 178.1,558.5 179.1,558.0 180.1,558.1 181.1,557.3 182.1,556.2 183.1,555.2 184.1,554.9 185.1,553.8 186.1,553.9 187.1,553.5 188.1,551.9 189.1,550.4 190.1,549.7 191.1,549.3 192.1,549.0 193.1,548.5 194.1,546.7 195.1,546.8 196.1,545.6 197.1,544.3 198.1,543.3 199.1,542.7 200.1,542.2 201.1,540.8 202.1,540.4 203.1,538.8 204.1,537.3 205.1,536.8 206.1,536.1 207.1,533.6 208.1,533.3 209.1,532.3 210.1,532.2 211.1,531.3 212.1,527.0 213.1,527.1 214.1,525.8 215.1,523.6 216.1,523.0 217.1,521.2 218.1,521.6 219.1,520.2 220.1,519.7 221.1,518.4 222.1,517.0 223.1,515.7 224.1,514.0 225.1,511.6 226.1,511.3 227.1,508.7 228.1,507.6 229.1,507.7 230.1,504.7 231.1,503.5 232.1,502.1 233.1,502.5 234.1,499.6 235.1,497.9 236.1,498.4 237.1,495.5 238.1,495.7 239.1,494.0 240.1,494.9 241.1,493.9 242.1,491.5 243.1,490.3 244.1,486.9 245.1,486.8 246.1,484.6 247.1,483.3 248.1,480.2 249.1,479.9 250.1,478.6 251.1,475.0 252.1,473.9 253.1,472.7 254.1,471.6 255.1,468.6 256.1,466.7 257.1,465.2 258.1,464.2 259.1,462.8 260.1,460.2 261.1,458.3 262.1,456.6 263.1,454.7 264.1,453.0 265.1,450.5 266.1,449.6 267.1,448.9 268.1,445.8 269.1,444.8 270.1,441.7 271.1,441.1 272.1,439.4 273.1,437.4 274.1,435.3" fill="none" stroke="#f2f24a" stroke-width="1.6" stroke-linejoin="round" /><polyline points="51.7,591.0 52.7,591.1 54.1,591.3 55.7,591.6 57.5,591.8 59.4,592.0 61.4,592.2 63.2,592.3 65.0,592.3 66.6,592.2 68.2,592.0 69.7,591.7 71.2,591.4 72.8,591.1 74.5,590.7 76.3,590.4 78.3,590.0 80.5,589.6 82.8,589.3 85.3,588.9 87.9,588.5 90.5,588.0 93.1,587.6 95.8,587.2 98.3,586.7 100.8,586.3 103.2,585.8 105.7,585.4 108.1,585.0 110.6,584.5 113.1,584.0 115.6,583.4 118.3,582.7 121.1,581.9 123.9,581.1 126.8,580.3 129.8,579.3 132.8,578.3 135.8,577.3 138.8,576.2 141.7,575.0 144.6,573.7 147.6,572.4 150.6,570.9 153.6,569.4 156.5,567.9 159.4,566.3 162.2,564.8 165.0,563.3 167.7,561.9 170.3,560.4 172.9,559.0 175.4,557.6 177.9,556.2 180.3,554.7 182.7,553.2 185.0,551.7 187.2,550.2 189.3,548.6 191.4,547.1 193.3,545.5 195.3,543.9 197.4,542.2 199.5,540.3 201.7,538.3 204.0,536.2 206.5,533.9 209.0,531.6 211.5,529.1 214.1,526.6 216.6,523.9 219.2,521.2 221.7,518.3 224.2,515.3 226.8,512.2 229.3,508.9 231.9,505.5 234.4,502.1 236.9,498.6 239.4,495.2 241.7,491.7 243.9,488.2 246.1,484.8 248.2,481.3 250.2,477.7 252.2,474.1 254.2,470.6 256.2,466.9 258.3,463.3 260.5,459.4 262.9,455.2 265.3,450.8 267.7,446.5 270.0,442.4 272.0,438.7 273.7,435.6 275.0,433.3" fill="none" stroke="#241c5c" stroke-width="1.6" stroke-linejoin="round" /></g></svg>
<div class="r" style="left:197px;top:421px;width:74px;height:28px;background:rgba(60,60,60,0.45);filter:blur(1px);"></div><div class="r" style="left:194px;top:418px;width:74px;height:28px;background:#d4d4d4;border:1px solid #9a9a9a;box-sizing:border-box;"></div><svg class="r" style="left:199px;top:422.7px" width="18" height="6" viewBox="0 0 18 6"><line x1="0" y1="3" x2="17" y2="3" stroke="#f2f24a" stroke-width="1.6"/></svg><div class="t" style="left:220px;transform-origin:0 50%;top:420.34px;font-size:9.76px;line-height:11.71px;color:#222;font-weight:400;transform:scaleX(0.8197);">Measured</div><svg class="r" style="left:199px;top:433px" width="18" height="6" viewBox="0 0 18 6"><line x1="0" y1="3" x2="17" y2="3" stroke="#2c2474" stroke-width="1.6"/></svg><div class="t" style="left:220px;transform-origin:0 50%;top:430.64px;font-size:9.76px;line-height:11.71px;color:#222;font-weight:400;transform:scaleX(0.8197);">Fitted</div>
<div class="t" style="left:-37px;width:400px;text-align:center;transform-origin:50% 50%;top:651.14px;font-size:9.76px;line-height:11.71px;color:#333;font-weight:400;transform:scaleX(0.8197);">Photon Energy (eV)</div>
<div class="t" style="left:-176.8px;width:400px;text-align:center;transform-origin:50% 50%;top:518.23px;font-size:8.61px;line-height:10.33px;color:#333;font-weight:400;transform:rotate(-90deg) scaleX(0.9524);">&#916;</div>
<div class="t" style="left:290.6px;transform-origin:0 50%;top:190.88px;font-size:8.54px;line-height:10.25px;color:#222;font-weight:400;transform:scaleX(0.8197);">Showing ellipsometry fit</div>
<div class="t" style="left:290.6px;transform-origin:0 50%;top:199.88px;font-size:8.54px;line-height:10.25px;color:#222;font-weight:400;transform:scaleX(0.8197);">results</div>
<svg class="r" style="left:303px;top:226px" width="9" height="9" viewBox="0 0 9 9"><circle cx="4.5" cy="4.5" r="4" fill="#f0f0f0" stroke="#8e8f8f" stroke-width="0.8"/><circle cx="4.5" cy="4.5" r="2" fill="#2a5a8a"/></svg>
<div class="t" style="left:315.6px;transform-origin:0 50%;top:224.88px;font-size:8.54px;line-height:10.25px;color:#222;font-weight:400;transform:scaleX(0.8197);">Adsorption</div>
<svg class="r" style="left:303px;top:241px" width="9" height="9" viewBox="0 0 9 9"><circle cx="4.5" cy="4.5" r="4" fill="#f4f4f4" stroke="#9a9a9a" stroke-width="0.8"/></svg>
<div class="t" style="left:315.6px;transform-origin:0 50%;top:240.48px;font-size:8.54px;line-height:10.25px;color:#222;font-weight:400;transform:scaleX(0.8197);">Desorption</div>
<div class="t" style="left:292.8px;transform-origin:0 50%;top:261.88px;font-size:8.54px;line-height:10.25px;color:#222;font-weight:400;transform:scaleX(0.8197);">Pressure</div>
<div class="r" style="left:291px;top:273px;width:83px;height:81px;border:1px solid #8a8a8a;background:#fff;box-sizing:border-box;"></div>
<div class="r" style="left:292px;top:275px;width:69px;height:8px;background:#3399ff;"></div>
<div class="t" style="left:293.5px;transform-origin:0 50%;top:273.48px;font-size:8.78px;line-height:10.54px;color:#fff;font-weight:400;transform:scaleX(0.8197);">0.011</div>
<div class="t" style="left:293.5px;transform-origin:0 50%;top:282.14px;font-size:8.78px;line-height:10.54px;color:#222;font-weight:400;transform:scaleX(0.8197);">0.089</div>
<div class="t" style="left:293.5px;transform-origin:0 50%;top:290.80px;font-size:8.78px;line-height:10.54px;color:#222;font-weight:400;transform:scaleX(0.8197);">0.184</div>
<div class="t" style="left:293.5px;transform-origin:0 50%;top:299.46px;font-size:8.78px;line-height:10.54px;color:#222;font-weight:400;transform:scaleX(0.8197);">0.281</div>
<div class="t" style="left:293.5px;transform-origin:0 50%;top:308.12px;font-size:8.78px;line-height:10.54px;color:#222;font-weight:400;transform:scaleX(0.8197);">0.372</div>
<div class="t" style="left:293.5px;transform-origin:0 50%;top:316.78px;font-size:8.78px;line-height:10.54px;color:#222;font-weight:400;transform:scaleX(0.8197);">0.462</div>
<div class="t" style="left:293.5px;transform-origin:0 50%;top:325.44px;font-size:8.78px;line-height:10.54px;color:#222;font-weight:400;transform:scaleX(0.8197);">0.553</div>
<div class="t" style="left:293.5px;transform-origin:0 50%;top:334.10px;font-size:8.78px;line-height:10.54px;color:#222;font-weight:400;transform:scaleX(0.8197);">0.646</div>
<div class="t" style="left:293.5px;transform-origin:0 50%;top:342.76px;font-size:8.78px;line-height:10.54px;color:#222;font-weight:400;transform:scaleX(0.8197);">0.7</div>
<div class="r" style="left:362px;top:274px;width:11px;height:79px;background:#f0f0f0;border-left:1px solid #e8e8e8;box-sizing:border-box;"></div>
<svg class="r" style="left:365px;top:277px" width="5" height="3" viewBox="0 0 5 3"><path d="M0 3H5L2.5 0Z" fill="#444"/></svg>
<svg class="r" style="left:365px;top:344px" width="5" height="3" viewBox="0 0 5 3"><path d="M0 0H5L2.5 3Z" fill="#444"/></svg>
<div class="r" style="left:363px;top:286px;width:9px;height:23px;border:1px solid #a0a0a0;border-radius:2px;background:linear-gradient(90deg,#f4f4f4,#dcdcdc);box-sizing:border-box;"></div>
<div class="r" style="left:365px;top:295px;width:5px;height:1px;background:#777;"></div>
<div class="r" style="left:365px;top:297px;width:5px;height:1px;background:#777;"></div>
<div class="r" style="left:365px;top:299px;width:5px;height:1px;background:#777;"></div>
<div class="t" style="left:302.8px;transform-origin:0 50%;top:372.44px;font-size:9.27px;line-height:11.13px;color:#444;font-weight:400;transform:scaleX(0.8197);">R&#178; =</div>
<div class="r" style="left:323px;top:366px;width:51px;height:20px;border:1px solid #f0f0ea;border-top:2px solid #d6d6d6;background:#fdfdf2;box-sizing:border-box;"></div>
<div class="t" style="left:326.6px;transform-origin:0 50%;top:369.31px;font-size:12.48px;line-height:14.98px;color:#1a1a1a;font-weight:400;transform:scaleX(0.9615);">0.99187</div>
<div class="t" style="left:292.8px;transform-origin:0 50%;top:397.35px;font-size:8.42px;line-height:10.10px;color:#444;font-weight:400;transform:scaleX(0.8197);">RMSE =</div>
<div class="r" style="left:323px;top:392px;width:51px;height:19px;border:1px solid #f0f0ea;border-top:2px solid #d6d6d6;background:#fdfdf2;box-sizing:border-box;"></div>
<div class="t" style="left:326.6px;transform-origin:0 50%;top:394.31px;font-size:12.48px;line-height:14.98px;color:#1a1a1a;font-weight:400;transform:scaleX(0.9615);">0.37364</div>
<div class="t" style="left:292.4px;transform-origin:0 50%;top:431.88px;font-size:8.54px;line-height:10.25px;color:#222;font-weight:400;transform:scaleX(0.8197);">Evaluation for phase:</div>
<div class="r" style="left:291px;top:443px;width:82px;height:13px;border:1px solid #e0e0e0;background:#fff;box-sizing:border-box;"></div>
<div class="t" style="left:293.5px;transform-origin:0 50%;top:444.38px;font-size:8.54px;line-height:10.25px;color:#222;font-weight:400;transform:scaleX(0.8197);">1 - Dispersionlaws</div>
<svg class="r" style="left:364px;top:448px" width="5" height="3" viewBox="0 0 5 3"><path d="M0 0H5L2.5 3Z" fill="#222"/></svg>
<div class="t" style="left:400.3px;transform-origin:0 50%;top:66.51px;font-size:9.15px;line-height:10.98px;color:#111;font-weight:700;transform:scaleX(0.8197);">Porosimetry results</div>
<div class="t" style="left:517px;transform-origin:0 50%;top:66.88px;font-size:8.54px;line-height:10.25px;color:#222;font-weight:400;transform:scaleX(0.8197);">PDF report</div>
<div class="r" style="left:558px;top:61px;width:20px;height:20px;border:1px solid #c8c8c8;border-radius:2px;background:linear-gradient(180deg,#fafafa,#e4e4e4);box-sizing:border-box;"></div>
<svg class="r" style="left:560px;top:63px" width="16" height="16" viewBox="0 0 16 16"><path d="M1.5 1 h10.5 l2.5 2.5 v11.5 h-13 Z" fill="#fbf6f6" stroke="#c8b8b8" stroke-width="0.6"/><rect x="1.5" y="2.2" width="10.5" height="3" fill="#c81830"/><path d="M4 13 C5.5 10 7 6.5 7.3 5.5 C8 8 9.5 10.5 12.5 11.5 C9.5 11.3 6.5 12 4 13 Z" fill="none" stroke="#d04050" stroke-width="0.8"/><rect x="10" y="12.8" width="4.5" height="1.8" fill="#3a7a5a"/></svg>
<div class="r" style="left:394px;top:90px;width:37px;height:13px;border:1px solid #9a9a9a;border-bottom:none;border-right-color:#eeeeee;box-sizing:border-box;background:#fff;"></div>
<div class="t" style="left:398px;transform-origin:0 50%;top:91.58px;font-size:8.54px;line-height:10.25px;color:#333;font-weight:400;transform:scaleX(0.8197);">Isotherms</div>
<div class="r" style="left:434px;top:89px;width:1px;height:15px;background:#d6d6d6;"></div>
<div class="r" style="left:474px;top:89px;width:1px;height:15px;background:#d6d6d6;"></div>
<div class="r" style="left:563.7px;top:89px;width:1.0px;height:15px;background:#d6d6d6;"></div>
<div class="r" style="left:647.4px;top:89px;width:1.0px;height:15px;background:#d6d6d6;"></div>
<div class="r" style="left:710.4px;top:89px;width:1.0px;height:15px;background:#d6d6d6;"></div>
<div class="r" style="left:749px;top:89px;width:1px;height:15px;background:#d6d6d6;"></div>
<div class="t" style="left:442.3px;transform-origin:0 50%;top:91.70px;font-size:8.17px;line-height:9.81px;color:#333;font-weight:400;transform:scaleX(0.8197);">Porosity</div>
<div class="t" style="left:481.4px;transform-origin:0 50%;top:91.48px;font-size:8.54px;line-height:10.25px;color:#333;font-weight:400;transform:scaleX(0.8197);">Pore Radius Distribution</div>
<div class="t" style="left:572px;transform-origin:0 50%;top:91.40px;font-size:8.66px;line-height:10.39px;color:#333;font-weight:400;transform:scaleX(0.8197);">Specific Surface Area</div>
<div class="t" style="left:655px;transform-origin:0 50%;top:91.48px;font-size:8.54px;line-height:10.25px;color:#333;font-weight:400;transform:scaleX(0.8197);">Young modulus</div>
<div class="t" style="left:718px;transform-origin:0 50%;top:91.33px;font-size:8.78px;line-height:10.54px;color:#333;font-weight:400;transform:scaleX(0.8197);">Service</div>
<div class="r" style="left:1142px;top:118px;width:129px;height:32px;border:1px solid #e0e0e0;border-radius:3px;box-sizing:border-box;"></div>
<div class="r" style="left:1146px;top:113px;width:51px;height:9px;background:#fff;"></div>
<div class="t" style="left:1148px;transform-origin:0 50%;top:112.91px;font-size:8.48px;line-height:10.17px;color:#111;font-weight:700;transform:scaleX(0.9259);">Solvent type</div>
<div class="r" style="left:1152px;top:128px;width:54px;height:14px;border:1px solid #dcdcdc;background:#fff;box-sizing:border-box;"></div>
<div class="t" style="left:1154.2px;transform-origin:0 50%;top:129.66px;font-size:8.91px;line-height:10.69px;color:#333;font-weight:400;transform:scaleX(0.8197);">Water</div>
<div class="r" style="left:474px;top:117px;width:636px;height:235px;background:#cccccc;"></div><svg class="r" style="left:0;top:0" width="1280" height="720"><line x1="595.5" y1="117" x2="595.5" y2="352" stroke="#636363" stroke-width="1"/><line x1="595.5" y1="352" x2="595.5" y2="356" stroke="#636363" stroke-width="1"/><line x1="724.5" y1="117" x2="724.5" y2="352" stroke="#636363" stroke-width="1"/><line x1="724.5" y1="352" x2="724.5" y2="356" stroke="#636363" stroke-width="1"/><line x1="852.5" y1="117" x2="852.5" y2="352" stroke="#636363" stroke-width="1"/><line x1="852.5" y1="352" x2="852.5" y2="356" stroke="#636363" stroke-width="1"/><line x1="980.5" y1="117" x2="980.5" y2="352" stroke="#636363" stroke-width="1"/><line x1="980.5" y1="352" x2="980.5" y2="356" stroke="#636363" stroke-width="1"/><line x1="1108.5" y1="352" x2="1108.5" y2="356" stroke="#636363" stroke-width="1"/><line x1="466" y1="153.5" x2="1110" y2="153.5" stroke="#636363" stroke-width="1"/><line x1="466" y1="192.5" x2="1110" y2="192.5" stroke="#636363" stroke-width="1"/><line x1="466" y1="231.5" x2="1110" y2="231.5" stroke="#636363" stroke-width="1"/><line x1="466" y1="271.5" x2="1110" y2="271.5" stroke="#636363" stroke-width="1"/><line x1="466" y1="310.5" x2="1110" y2="310.5" stroke="#636363" stroke-width="1"/><line x1="466" y1="350.5" x2="1110" y2="350.5" stroke="#636363" stroke-width="1"/></svg><div class="t" style="left:395.76px;width:400px;text-align:center;transform-origin:50% 50%;top:355.60px;font-size:9.00px;line-height:10.80px;color:#333;font-weight:400;transform:scaleX(0.8000);">0.2</div><div class="t" style="left:524.02px;width:400px;text-align:center;transform-origin:50% 50%;top:355.60px;font-size:9.00px;line-height:10.80px;color:#333;font-weight:400;transform:scaleX(0.8000);">0.4</div><div class="t" style="left:652.28px;width:400px;text-align:center;transform-origin:50% 50%;top:355.60px;font-size:9.00px;line-height:10.80px;color:#333;font-weight:400;transform:scaleX(0.8000);">0.6</div><div class="t" style="left:780.54px;width:400px;text-align:center;transform-origin:50% 50%;top:355.60px;font-size:9.00px;line-height:10.80px;color:#333;font-weight:400;transform:scaleX(0.8000);">0.8</div><div class="t" style="left:908.8px;width:400px;text-align:center;transform-origin:50% 50%;top:355.60px;font-size:9.00px;line-height:10.80px;color:#333;font-weight:400;transform:scaleX(0.8000);">1</div><div class="t" style="right:815.7px;transform-origin:100% 50%;top:147.60px;font-size:9.00px;line-height:10.80px;color:#333;font-weight:400;transform:scaleX(0.8000);">1.35</div><div class="t" style="right:815.7px;transform-origin:100% 50%;top:187.00px;font-size:9.00px;line-height:10.80px;color:#333;font-weight:400;transform:scaleX(0.8000);">1.3</div><div class="t" style="right:815.7px;transform-origin:100% 50%;top:226.40px;font-size:9.00px;line-height:10.80px;color:#333;font-weight:400;transform:scaleX(0.8000);">1.25</div><div class="t" style="right:815.7px;transform-origin:100% 50%;top:265.80px;font-size:9.00px;line-height:10.80px;color:#333;font-weight:400;transform:scaleX(0.8000);">1.2</div><div class="t" style="right:815.7px;transform-origin:100% 50%;top:305.20px;font-size:9.00px;line-height:10.80px;color:#333;font-weight:400;transform:scaleX(0.8000);">1.15</div><div class="t" style="right:815.7px;transform-origin:100% 50%;top:344.60px;font-size:9.00px;line-height:10.80px;color:#333;font-weight:400;transform:scaleX(0.8000);">1.1</div>
<div class="t" style="left:591.5px;width:400px;text-align:center;transform-origin:50% 50%;top:370.37px;font-size:9.88px;line-height:11.86px;color:#333;font-weight:400;transform:scaleX(0.8197);">Relative pressure (p / p0)</div>
<div class="t" style="left:230.2px;width:400px;text-align:center;transform-origin:50% 50%;top:229.32px;font-size:8.96px;line-height:10.75px;color:#333;font-weight:400;transform:rotate(-90deg) scaleX(0.8929);">Refractive index</div>
<div class="r" style="left:474px;top:401px;width:636px;height:236px;background:#cccccc;"></div><svg class="r" style="left:0;top:0" width="1280" height="720"><line x1="595.5" y1="401" x2="595.5" y2="637" stroke="#636363" stroke-width="1"/><line x1="595.5" y1="637" x2="595.5" y2="641" stroke="#636363" stroke-width="1"/><line x1="724.5" y1="401" x2="724.5" y2="637" stroke="#636363" stroke-width="1"/><line x1="724.5" y1="637" x2="724.5" y2="641" stroke="#636363" stroke-width="1"/><line x1="852.5" y1="401" x2="852.5" y2="637" stroke="#636363" stroke-width="1"/><line x1="852.5" y1="637" x2="852.5" y2="641" stroke="#636363" stroke-width="1"/><line x1="980.5" y1="401" x2="980.5" y2="637" stroke="#636363" stroke-width="1"/><line x1="980.5" y1="637" x2="980.5" y2="641" stroke="#636363" stroke-width="1"/><line x1="1108.5" y1="637" x2="1108.5" y2="641" stroke="#636363" stroke-width="1"/><line x1="466" y1="426.5" x2="1110" y2="426.5" stroke="#636363" stroke-width="1"/><line x1="466" y1="499.5" x2="1110" y2="499.5" stroke="#636363" stroke-width="1"/><line x1="466" y1="572.5" x2="1110" y2="572.5" stroke="#636363" stroke-width="1"/></svg><div class="t" style="left:395.76px;width:400px;text-align:center;transform-origin:50% 50%;top:640.20px;font-size:9.00px;line-height:10.80px;color:#333;font-weight:400;transform:scaleX(0.8000);">0.2</div><div class="t" style="left:524.02px;width:400px;text-align:center;transform-origin:50% 50%;top:640.20px;font-size:9.00px;line-height:10.80px;color:#333;font-weight:400;transform:scaleX(0.8000);">0.4</div><div class="t" style="left:652.28px;width:400px;text-align:center;transform-origin:50% 50%;top:640.20px;font-size:9.00px;line-height:10.80px;color:#333;font-weight:400;transform:scaleX(0.8000);">0.6</div><div class="t" style="left:780.54px;width:400px;text-align:center;transform-origin:50% 50%;top:640.20px;font-size:9.00px;line-height:10.80px;color:#333;font-weight:400;transform:scaleX(0.8000);">0.8</div><div class="t" style="left:908.8px;width:400px;text-align:center;transform-origin:50% 50%;top:640.20px;font-size:9.00px;line-height:10.80px;color:#333;font-weight:400;transform:scaleX(0.8000);">1</div><div class="t" style="right:815.7px;transform-origin:100% 50%;top:420.60px;font-size:9.00px;line-height:10.80px;color:#333;font-weight:400;transform:scaleX(0.8000);">1150</div><div class="t" style="right:815.7px;transform-origin:100% 50%;top:493.80px;font-size:9.00px;line-height:10.80px;color:#333;font-weight:400;transform:scaleX(0.8000);">1100</div><div class="t" style="right:815.7px;transform-origin:100% 50%;top:567.00px;font-size:9.00px;line-height:10.80px;color:#333;font-weight:400;transform:scaleX(0.8000);">1050</div>
<div class="t" style="left:591.5px;width:400px;text-align:center;transform-origin:50% 50%;top:654.37px;font-size:9.88px;line-height:11.86px;color:#333;font-weight:400;transform:scaleX(0.8197);">Relative pressure (p / p0)</div>
<div class="t" style="left:230.2px;width:400px;text-align:center;transform-origin:50% 50%;top:513.42px;font-size:8.96px;line-height:10.75px;color:#333;font-weight:400;transform:rotate(-90deg) scaleX(0.8929);">Layer thickness (A)</div>
<svg class="r" style="left:0;top:0" width="1280" height="720"><defs><clipPath id="cl3"><rect x="470" y="113" width="645" height="243"/></clipPath><clipPath id="cl4"><rect x="470" y="397" width="645" height="244"/></clipPath></defs><g clip-path="url(#cl3)"><polyline points="474.4,334.0 524.3,330.9 585.1,328.5 647.3,326.1 705.4,324.0 763.2,321.2 822.0,317.1 882.1,310.6 916.7,300.0 949.0,286.0 961.7,278.0 972.3,270.0 987.3,260.0 1000.7,249.0 1015.3,233.8 1037.3,202.2 1058.3,174.8 1076.5,143.7 1096.5,136.1 1109.3,137.1" fill="none" stroke="#5560c0" stroke-width="1.35" stroke-linejoin="round" /><circle cx="474.4" cy="334" r="1.9" fill="#dcdcf4" stroke="#5560c0" stroke-width="0.7"/><circle cx="524.3" cy="330.9" r="1.9" fill="#dcdcf4" stroke="#5560c0" stroke-width="0.7"/><circle cx="585.1" cy="328.5" r="1.9" fill="#dcdcf4" stroke="#5560c0" stroke-width="0.7"/><circle cx="647.3" cy="326.1" r="1.9" fill="#dcdcf4" stroke="#5560c0" stroke-width="0.7"/><circle cx="705.4" cy="324" r="1.9" fill="#dcdcf4" stroke="#5560c0" stroke-width="0.7"/><circle cx="763.2" cy="321.25" r="1.9" fill="#dcdcf4" stroke="#5560c0" stroke-width="0.7"/><circle cx="822" cy="317.1" r="1.9" fill="#dcdcf4" stroke="#5560c0" stroke-width="0.7"/><circle cx="882.1" cy="310.6" r="1.9" fill="#dcdcf4" stroke="#5560c0" stroke-width="0.7"/><circle cx="916.7" cy="300" r="1.9" fill="#dcdcf4" stroke="#5560c0" stroke-width="0.7"/><circle cx="949" cy="286" r="1.9" fill="#dcdcf4" stroke="#5560c0" stroke-width="0.7"/><circle cx="961.7" cy="278" r="1.9" fill="#dcdcf4" stroke="#5560c0" stroke-width="0.7"/><circle cx="972.3" cy="270" r="1.9" fill="#dcdcf4" stroke="#5560c0" stroke-width="0.7"/><circle cx="987.3" cy="260" r="1.9" fill="#dcdcf4" stroke="#5560c0" stroke-width="0.7"/><circle cx="1000.7" cy="249" r="1.9" fill="#dcdcf4" stroke="#5560c0" stroke-width="0.7"/><circle cx="1015.3" cy="233.75" r="1.9" fill="#dcdcf4" stroke="#5560c0" stroke-width="0.7"/><circle cx="1037.3" cy="202.2" r="1.9" fill="#dcdcf4" stroke="#5560c0" stroke-width="0.7"/><circle cx="1058.3" cy="174.8" r="1.9" fill="#dcdcf4" stroke="#5560c0" stroke-width="0.7"/><circle cx="1076.5" cy="143.7" r="1.9" fill="#dcdcf4" stroke="#5560c0" stroke-width="0.7"/><circle cx="1096.5" cy="136.1" r="1.9" fill="#dcdcf4" stroke="#5560c0" stroke-width="0.7"/><circle cx="1109.3" cy="137.1" r="1.9" fill="#dcdcf4" stroke="#5560c0" stroke-width="0.7"/><polyline points="474.4,329.2 526.3,324.7 593.0,321.6 661.1,318.2 724.0,313.7 791.0,308.9 857.0,300.3 925.7,275.0 960.3,250.0 989.0,215.0 1002.3,193.0 1017.8,176.8 1041.1,160.8 1064.2,147.8 1074.1,142.9 1081.4,141.0 1088.0,139.6 1097.0,137.9 1100.3,137.9 1109.1,137.1" fill="none" stroke="#b8505e" stroke-width="1.35" stroke-linejoin="round" /><circle cx="474.4" cy="329.2" r="1.9" fill="#f0dada" stroke="#b8505e" stroke-width="0.7"/><circle cx="526.3" cy="324.7" r="1.9" fill="#f0dada" stroke="#b8505e" stroke-width="0.7"/><circle cx="593" cy="321.6" r="1.9" fill="#f0dada" stroke="#b8505e" stroke-width="0.7"/><circle cx="661.1" cy="318.2" r="1.9" fill="#f0dada" stroke="#b8505e" stroke-width="0.7"/><circle cx="724" cy="313.7" r="1.9" fill="#f0dada" stroke="#b8505e" stroke-width="0.7"/><circle cx="791" cy="308.9" r="1.9" fill="#f0dada" stroke="#b8505e" stroke-width="0.7"/><circle cx="857" cy="300.3" r="1.9" fill="#f0dada" stroke="#b8505e" stroke-width="0.7"/><circle cx="925.7" cy="275" r="1.9" fill="#f0dada" stroke="#b8505e" stroke-width="0.7"/><circle cx="960.3" cy="250" r="1.9" fill="#f0dada" stroke="#b8505e" stroke-width="0.7"/><circle cx="989" cy="215" r="1.9" fill="#f0dada" stroke="#b8505e" stroke-width="0.7"/><circle cx="1002.3" cy="193" r="1.9" fill="#f0dada" stroke="#b8505e" stroke-width="0.7"/><circle cx="1017.8" cy="176.8" r="1.9" fill="#f0dada" stroke="#b8505e" stroke-width="0.7"/><circle cx="1041.1" cy="160.8" r="1.9" fill="#f0dada" stroke="#b8505e" stroke-width="0.7"/><circle cx="1064.2" cy="147.8" r="1.9" fill="#f0dada" stroke="#b8505e" stroke-width="0.7"/><circle cx="1074.1" cy="142.9" r="1.9" fill="#f0dada" stroke="#b8505e" stroke-width="0.7"/><circle cx="1081.4" cy="141" r="1.9" fill="#f0dada" stroke="#b8505e" stroke-width="0.7"/><circle cx="1088" cy="139.6" r="1.9" fill="#f0dada" stroke="#b8505e" stroke-width="0.7"/><circle cx="1097" cy="137.9" r="1.9" fill="#f0dada" stroke="#b8505e" stroke-width="0.7"/><circle cx="1100.3" cy="137.9" r="1.9" fill="#f0dada" stroke="#b8505e" stroke-width="0.7"/><circle cx="1109.1" cy="137.1" r="1.9" fill="#f0dada" stroke="#b8505e" stroke-width="0.7"/></g><g clip-path="url(#cl4)"><polyline points="474.4,432.7 524.3,426.1 585.1,422.7 647.3,421.0 705.4,420.6 763.2,422.0 822.0,424.1 882.1,432.3 916.7,440.3 949.0,456.3 961.7,467.7 972.3,476.7 987.3,489.0 1000.7,503.7 1015.3,520.7 1037.3,538.3 1058.3,536.3 1076.5,556.7 1096.5,534.0 1109.3,496.3" fill="none" stroke="#5560c0" stroke-width="1.35" stroke-linejoin="round" /><circle cx="474.4" cy="432.7" r="1.9" fill="#dcdcf4" stroke="#5560c0" stroke-width="0.7"/><circle cx="524.3" cy="426.1" r="1.9" fill="#dcdcf4" stroke="#5560c0" stroke-width="0.7"/><circle cx="585.1" cy="422.7" r="1.9" fill="#dcdcf4" stroke="#5560c0" stroke-width="0.7"/><circle cx="647.3" cy="421" r="1.9" fill="#dcdcf4" stroke="#5560c0" stroke-width="0.7"/><circle cx="705.4" cy="420.6" r="1.9" fill="#dcdcf4" stroke="#5560c0" stroke-width="0.7"/><circle cx="763.2" cy="422" r="1.9" fill="#dcdcf4" stroke="#5560c0" stroke-width="0.7"/><circle cx="822" cy="424.1" r="1.9" fill="#dcdcf4" stroke="#5560c0" stroke-width="0.7"/><circle cx="882.1" cy="432.3" r="1.9" fill="#dcdcf4" stroke="#5560c0" stroke-width="0.7"/><circle cx="916.7" cy="440.3" r="1.9" fill="#dcdcf4" stroke="#5560c0" stroke-width="0.7"/><circle cx="949" cy="456.3" r="1.9" fill="#dcdcf4" stroke="#5560c0" stroke-width="0.7"/><circle cx="961.7" cy="467.7" r="1.9" fill="#dcdcf4" stroke="#5560c0" stroke-width="0.7"/><circle cx="972.3" cy="476.7" r="1.9" fill="#dcdcf4" stroke="#5560c0" stroke-width="0.7"/><circle cx="987.3" cy="489" r="1.9" fill="#dcdcf4" stroke="#5560c0" stroke-width="0.7"/><circle cx="1000.7" cy="503.7" r="1.9" fill="#dcdcf4" stroke="#5560c0" stroke-width="0.7"/><circle cx="1015.3" cy="520.7" r="1.9" fill="#dcdcf4" stroke="#5560c0" stroke-width="0.7"/><circle cx="1037.3" cy="538.3" r="1.9" fill="#dcdcf4" stroke="#5560c0" stroke-width="0.7"/><circle cx="1058.3" cy="536.3" r="1.9" fill="#dcdcf4" stroke="#5560c0" stroke-width="0.7"/><circle cx="1076.5" cy="556.7" r="1.9" fill="#dcdcf4" stroke="#5560c0" stroke-width="0.7"/><circle cx="1096.5" cy="534" r="1.9" fill="#dcdcf4" stroke="#5560c0" stroke-width="0.7"/><circle cx="1109.3" cy="496.3" r="1.9" fill="#dcdcf4" stroke="#5560c0" stroke-width="0.7"/><polyline points="474.4,453.6 526.3,450.5 593.0,444.3 661.1,446.8 724.0,446.8 791.0,451.2 857.0,460.8 925.7,487.7 960.3,522.3 989.0,566.0 1002.3,618.3 1017.8,609.7 1041.1,590.0 1064.2,572.0 1074.1,564.0 1081.4,555.0 1088.0,546.0 1097.0,539.0 1100.3,531.7 1109.1,512.7" fill="none" stroke="#b8505e" stroke-width="1.35" stroke-linejoin="round" /><circle cx="474.4" cy="453.6" r="1.9" fill="#f0dada" stroke="#b8505e" stroke-width="0.7"/><circle cx="526.3" cy="450.5" r="1.9" fill="#f0dada" stroke="#b8505e" stroke-width="0.7"/><circle cx="593" cy="444.3" r="1.9" fill="#f0dada" stroke="#b8505e" stroke-width="0.7"/><circle cx="661.1" cy="446.75" r="1.9" fill="#f0dada" stroke="#b8505e" stroke-width="0.7"/><circle cx="724" cy="446.75" r="1.9" fill="#f0dada" stroke="#b8505e" stroke-width="0.7"/><circle cx="791" cy="451.2" r="1.9" fill="#f0dada" stroke="#b8505e" stroke-width="0.7"/><circle cx="857" cy="460.8" r="1.9" fill="#f0dada" stroke="#b8505e" stroke-width="0.7"/><circle cx="925.7" cy="487.7" r="1.9" fill="#f0dada" stroke="#b8505e" stroke-width="0.7"/><circle cx="960.3" cy="522.3" r="1.9" fill="#f0dada" stroke="#b8505e" stroke-width="0.7"/><circle cx="989" cy="566" r="1.9" fill="#f0dada" stroke="#b8505e" stroke-width="0.7"/><circle cx="1002.3" cy="618.3" r="1.9" fill="#f0dada" stroke="#b8505e" stroke-width="0.7"/><circle cx="1017.8" cy="609.7" r="1.9" fill="#f0dada" stroke="#b8505e" stroke-width="0.7"/><circle cx="1041.1" cy="590" r="1.9" fill="#f0dada" stroke="#b8505e" stroke-width="0.7"/><circle cx="1064.2" cy="572" r="1.9" fill="#f0dada" stroke="#b8505e" stroke-width="0.7"/><circle cx="1074.1" cy="564" r="1.9" fill="#f0dada" stroke="#b8505e" stroke-width="0.7"/><circle cx="1081.4" cy="555" r="1.9" fill="#f0dada" stroke="#b8505e" stroke-width="0.7"/><circle cx="1088" cy="546" r="1.9" fill="#f0dada" stroke="#b8505e" stroke-width="0.7"/><circle cx="1097" cy="539" r="1.9" fill="#f0dada" stroke="#b8505e" stroke-width="0.7"/><circle cx="1100.3" cy="531.7" r="1.9" fill="#f0dada" stroke="#b8505e" stroke-width="0.7"/><circle cx="1109.1" cy="512.7" r="1.9" fill="#f0dada" stroke="#b8505e" stroke-width="0.7"/></g></svg>
<div class="r" style="left:1016px;top:410px;width:78px;height:29px;background:rgba(60,60,60,0.45);filter:blur(1px);"></div><div class="r" style="left:1013px;top:407px;width:78px;height:29px;background:#d4d4d4;border:1px solid #9a9a9a;box-sizing:border-box;"></div><svg class="r" style="left:1018px;top:412.7px" width="18" height="6" viewBox="0 0 18 6"><line x1="0" y1="3" x2="17" y2="3" stroke="#5560c0" stroke-width="1.6"/><circle cx="8.5" cy="3" r="1.8" fill="#e8e8f0" stroke="#5560c0" stroke-width="0.8"/></svg><div class="t" style="left:1039px;transform-origin:0 50%;top:410.42px;font-size:9.64px;line-height:11.57px;color:#222;font-weight:400;transform:scaleX(0.8197);">Adsorption</div><svg class="r" style="left:1018px;top:423px" width="18" height="6" viewBox="0 0 18 6"><line x1="0" y1="3" x2="17" y2="3" stroke="#b8505e" stroke-width="1.6"/><circle cx="8.5" cy="3" r="1.8" fill="#e8e8f0" stroke="#b8505e" stroke-width="0.8"/></svg><div class="t" style="left:1039px;transform-origin:0 50%;top:420.72px;font-size:9.64px;line-height:11.57px;color:#222;font-weight:400;transform:scaleX(0.8197);">Desorption</div>
<div class="r" style="left:872px;top:193px;width:139px;height:115px;background:rgba(0,0,0,0.12);filter:blur(1px);"></div>
<div class="r" style="left:871px;top:192px;width:138px;height:114px;background:#fbfbfb;border:1px solid #b8b8b8;box-sizing:border-box;"></div>
<div class="r" style="left:872px;top:194px;width:136px;height:15px;background:linear-gradient(180deg,#d6eefc,#c4e4fa);border:1px solid #8cc4ec;border-radius:2px;box-sizing:border-box;"></div>
<div class="r" style="left:893px;top:225px;width:115px;height:1px;background:#d8d8d8;"></div>
<div class="r" style="left:893px;top:244px;width:115px;height:1px;background:#d8d8d8;"></div>
<div class="t" style="left:895.2px;transform-origin:0 50%;top:196.40px;font-size:8.00px;line-height:9.60px;color:#1e1e1e;font-weight:400;">Show Toolbar</div>
<div class="t" style="left:895.2px;transform-origin:0 50%;top:211.20px;font-size:8.00px;line-height:9.60px;color:#1e1e1e;font-weight:400;">Show Legend</div>
<div class="t" style="left:895.2px;transform-origin:0 50%;top:229.80px;font-size:8.00px;line-height:9.60px;color:#1e1e1e;font-weight:400;">Set Manual Ranges</div>
<div class="t" style="left:895.2px;transform-origin:0 50%;top:248.50px;font-size:8.00px;line-height:9.60px;color:#1e1e1e;font-weight:400;">Save values to CSV</div>
<div class="t" style="left:895.2px;transform-origin:0 50%;top:263.40px;font-size:8.00px;line-height:9.60px;color:#1e1e1e;font-weight:400;">Save image</div>
<div class="t" style="left:895.2px;transform-origin:0 50%;top:278.20px;font-size:8.00px;line-height:9.60px;color:#1e1e1e;font-weight:400;">Copy image to Clipboard</div>
<div class="t" style="left:895.2px;transform-origin:0 50%;top:292.50px;font-size:8.00px;line-height:9.60px;color:#1e1e1e;font-weight:400;">Copy data to Clipboard</div>
<svg class="r" style="left:875px;top:248px" width="10" height="10" viewBox="0 0 10 10"><rect x="0.5" y="0.5" width="9" height="9" fill="#fff" stroke="#3a78c8"/><rect x="0.5" y="0.5" width="9" height="2.5" fill="#3a78c8"/><path d="M3 4 v4 h4" stroke="#2a60b0" stroke-width="1.2" fill="none"/></svg>
<svg class="r" style="left:875px;top:263px" width="10" height="10" viewBox="0 0 10 10"><rect x="0.5" y="0.5" width="9" height="9" fill="#dfeaf6" stroke="#5a8ac8"/><path d="M1 7 L4 3 L6 5 L9 2" stroke="#30a030" fill="none"/><path d="M4 6 v3 h4" stroke="#2a60b0" stroke-width="1.2" fill="none"/></svg>
<svg class="r" style="left:875px;top:278px" width="11" height="10" viewBox="0 0 11 10"><rect x="0.5" y="0.5" width="8" height="8" fill="#e8eef0" stroke="#8aa0a8"/><path d="M1 6 L4 3 L7 5" stroke="#40a040" fill="none"/><rect x="5" y="4.5" width="5.5" height="5" fill="#f0a020"/></svg>
<svg class="r" style="left:893px;top:197px" width="8" height="13" viewBox="0 0 8 13"><path d="M0.5 0.5 L0.5 10.5 L3 8.2 L4.8 12 L6.2 11.3 L4.5 7.6 L7.5 7.6 Z" fill="#fff" stroke="#222" stroke-width="0.8"/></svg>
<div class="r" style="left:0px;top:681px;width:1280px;height:1px;background:#c6c6c6;"></div>
<div class="r" style="left:0px;top:682px;width:1280px;height:14px;background:#fcecec;"></div>
<div class="r" style="left:1px;top:684px;width:185px;height:10px;background:#7aa2e6;"></div>
<div class="t" style="left:2.5px;transform-origin:0 50%;top:684.05px;font-size:8.75px;line-height:10.49px;color:#0a1650;font-weight:400;transform:scaleX(0.9091);">Finished - Number of iterates has reached Max. Iter.</div>
<svg class="r" style="left:1262px;top:627px" width="18" height="36" viewBox="0 0 18 36"><path d="M2 2 Q2 0 4 0 H18 V35 L2 25.5 Z" fill="#5e6266"/><rect x="4" y="4" width="13" height="13.5" rx="1" fill="#1c3452"/><circle cx="10.5" cy="10.8" r="4.6" fill="none" stroke="#5a7aa0" stroke-width="1.1"/><path d="M7.5 10.8 H13.5" stroke="#5a7aa0" stroke-width="1.4"/></svg>
<div class="r" style="left:0px;top:696px;width:1280px;height:24px;background:linear-gradient(180deg,#4a4a52 0px,#1a1c24 1.5px,#06070e 4px,#03040a 100%);"></div>
<svg class="r" style="left:5px;top:696px" width="26" height="24" viewBox="0 0 26 24"><defs><radialGradient id="orb" cx="0.5" cy="0.55" r="0.55"><stop offset="0" stop-color="#5ab0d8"/><stop offset="0.6" stop-color="#2a6a98"/><stop offset="1" stop-color="#0a2a48"/></radialGradient><linearGradient id="orbh" x1="0" y1="0" x2="0" y2="1"><stop offset="0" stop-color="#fff" stop-opacity="0.55"/><stop offset="1" stop-color="#fff" stop-opacity="0"/></linearGradient></defs>
<circle cx="13" cy="13" r="11.8" fill="url(#orb)" stroke="#3a4a5a" stroke-width="0.6"/>
<path d="M7.5 9 Q9.5 7.8 12 8.6 L12 12.6 Q9.5 11.8 7.5 13 Z" fill="#f06030"/><path d="M13 8.8 Q15.5 9.6 18 8.6 L18 12.6 Q15.5 13.6 13 12.8 Z" fill="#80c030"/>
<path d="M7.5 14 Q9.5 12.8 12 13.6 L12 17.6 Q9.5 16.8 7.5 18 Z" fill="#30a8f0"/><path d="M13 13.8 Q15.5 14.6 18 13.6 L18 17.6 Q15.5 18.6 13 17.8 Z" fill="#f8c820"/>
<ellipse cx="13" cy="7" rx="9" ry="5.5" fill="url(#orbh)"/></svg>
<svg class="r" style="left:48px;top:697px" width="23" height="23" viewBox="0 0 23 23"><defs><linearGradient id="ieg" x1="0" y1="0" x2="0" y2="1"><stop offset="0" stop-color="#7ae0f8"/><stop offset="1" stop-color="#1a90d8"/></linearGradient></defs><path d="M11.5 4.5 C7 4.5 4 8 4 12 C4 16.5 7.5 19.5 11.5 19.5 C14.5 19.5 17 18 18 15.5 H13.5 C13 16.5 12.2 17 11.3 17 C9.3 17 8 15.5 7.9 13.5 H18.8 C19 12.9 19 12.5 19 12 C19 7.5 16 4.5 11.5 4.5 Z M8 10.8 C8.3 8.5 9.7 7.2 11.5 7.2 C13.3 7.2 14.7 8.5 15 10.8 Z" fill="url(#ieg)"/><path d="M3 20 C1 17 6 7 14 3.5 C18 1.8 21.5 1.5 21 4 C20.5 6 18 8 16.5 9" stroke="#e8c030" stroke-width="1.5" fill="none"/></svg>
<svg class="r" style="left:90px;top:698px" width="22" height="20" viewBox="0 0 22 20"><path d="M1 3 h7 l2 2 h11 v13 h-20 Z" fill="#f4dc88" stroke="#c8a850" stroke-width="0.8"/><rect x="2" y="7" width="18" height="10" fill="#fae8a8"/><rect x="6" y="13" width="10" height="5" fill="#8ab8d8"/></svg>
<svg class="r" style="left:132px;top:698px" width="20" height="20" viewBox="0 0 20 20"><defs><linearGradient id="ofW" x1="0" y1="0" x2="1" y2="1"><stop offset="0" stop-color="#e8f0fc"/><stop offset="1" stop-color="#b8d0f0"/></linearGradient></defs><rect x="1" y="1" width="18" height="18" rx="1" fill="url(#ofW)"/><path d="M11 9 h7 v9 h-7 Z" fill="#fff" opacity="0.75"/><text x="7" y="14.5" font-family="Liberation Sans" font-weight="700" font-size="13" fill="#1a4aa8" text-anchor="middle">W</text></svg>
<svg class="r" style="left:173px;top:698px" width="20" height="20" viewBox="0 0 20 20"><defs><linearGradient id="ofX" x1="0" y1="0" x2="1" y2="1"><stop offset="0" stop-color="#e0f8dc"/><stop offset="1" stop-color="#a8e0a0"/></linearGradient></defs><rect x="1" y="1" width="18" height="18" rx="1" fill="url(#ofX)"/><path d="M11 9 h7 v9 h-7 Z" fill="#fff" opacity="0.75"/><text x="7" y="14.5" font-family="Liberation Sans" font-weight="700" font-size="13" fill="#2a8a2a" text-anchor="middle">X</text></svg>
<svg class="r" style="left:214px;top:698px" width="20" height="20" viewBox="0 0 20 20"><defs><linearGradient id="ofP" x1="0" y1="0" x2="1" y2="1"><stop offset="0" stop-color="#fce8e0"/><stop offset="1" stop-color="#f0b8a0"/></linearGradient></defs><rect x="1" y="1" width="18" height="18" rx="1" fill="url(#ofP)"/><path d="M11 9 h7 v9 h-7 Z" fill="#fff" opacity="0.75"/><text x="7" y="14.5" font-family="Liberation Sans" font-weight="700" font-size="13" fill="#c8401a" text-anchor="middle">P</text></svg>
<svg class="r" style="left:255px;top:698px" width="20" height="20" viewBox="0 0 20 20"><defs><linearGradient id="ofO" x1="0" y1="0" x2="1" y2="1"><stop offset="0" stop-color="#fcf4d0"/><stop offset="1" stop-color="#f0d890"/></linearGradient></defs><rect x="1" y="1" width="18" height="18" rx="1" fill="url(#ofO)"/><path d="M11 9 h7 v9 h-7 Z" fill="#fff" opacity="0.75"/><text x="7" y="14.5" font-family="Liberation Sans" font-weight="700" font-size="13" fill="#d08010" text-anchor="middle">O</text></svg>
<svg class="r" style="left:297px;top:698px" width="21" height="21" viewBox="0 0 21 21"><defs><radialGradient id="ffg" cx="0.6" cy="0.35" r="0.5"><stop offset="0" stop-color="#60a8e8"/><stop offset="1" stop-color="#2a50b0"/></radialGradient></defs><circle cx="10.5" cy="10.5" r="9.8" fill="#e05a18"/><circle cx="12" cy="8.5" r="6" fill="url(#ffg)"/><path d="M1.5 9 C2 16 7 20 12 19.5 C17 19 20 15 20 10 C18 14 14 15.5 10 14.5 C7 13.5 5.5 11 6 8 C4 8.5 3 6.5 4 4.5 C2.5 5.5 1.5 7 1.5 9 Z" fill="#f08a20"/></svg>
<div class="r" style="left:338px;top:698px;width:22px;height:21px;background:#fdfdfd;border-radius:2px;"></div>
<svg class="r" style="left:342px;top:702px" width="14" height="13" viewBox="0 0 14 13"><path d="M3.5 1 L7 3.2 L3.5 5.5 L0 3.2 Z M10.5 1 L14 3.2 L10.5 5.5 L7 3.2 Z M3.5 5.5 L7 7.8 L3.5 10 L0 7.8 Z M10.5 5.5 L14 7.8 L10.5 10 L7 7.8 Z M3.5 10.8 L7 8.6 L10.5 10.8 L7 13 Z" fill="#1a68d8"/></svg>
<svg class="r" style="left:379px;top:698px" width="22" height="21" viewBox="0 0 22 21"><defs><radialGradient id="st" cx="0.5" cy="0.5" r="0.5"><stop offset="0" stop-color="#fff"/><stop offset="0.25" stop-color="#c8c8c8"/><stop offset="1" stop-color="#000" stop-opacity="0"/></radialGradient></defs><circle cx="11" cy="10.5" r="10" fill="url(#st)"/><path d="M11 2 V19 M3 10.5 H19" stroke="#eee" stroke-width="0.5" opacity="0.6"/></svg>
<div class="r" style="left:412px;top:697px;width:39px;height:23px;background:linear-gradient(160deg,#d4d4d6 0%,#a8a8ac 45%,#747478 100%);border:1px solid #5a5a5e;border-bottom:none;border-radius:2px 2px 0 0;box-sizing:border-box;"></div>
<div class="r" style="left:453px;top:697px;width:40px;height:23px;background:linear-gradient(160deg,#7a7a7e 0%,#3a3a3e 50%,#1a1a1e 100%);border:1px solid #4a4a4e;border-bottom:none;border-radius:2px 2px 0 0;box-sizing:border-box;"></div>
<div class="r" style="left:495px;top:697px;width:39px;height:23px;background:linear-gradient(160deg,#6a6a6e 0%,#38383c 50%,#1c1c20 100%);border:1px solid #4a4a4e;border-bottom:none;border-radius:2px 2px 0 0;box-sizing:border-box;"></div>
<svg class="r" style="left:421px;top:699px" width="21" height="20" viewBox="0 0 21 20"><circle cx="10.5" cy="9.8" r="9.3" fill="#0808d0"/><path d="M9.5 17 C9.5 13 9 11 7 9.5 C5.5 8.3 5.8 5.8 7.5 5.5 C9.5 5.2 10.5 7.5 10.5 10 C11 7 12.8 5 14.5 5.5 C16 6 15.8 9 13.5 10.5 C12.5 11.2 11 11.3 10.3 11" stroke="#fff" stroke-width="1.6" fill="none" stroke-linecap="round"/></svg>
<div class="r" style="left:462px;top:697px;width:22px;height:23px;background:#1a6ad0;"></div>
<svg class="r" style="left:463px;top:699px" width="20" height="20" viewBox="0 0 20 20"><circle cx="10" cy="10" r="8.3" fill="#fff"/><path d="M4.5 10 H15.5" stroke="#1a6ad0" stroke-width="1.8"/><path d="M3.8 10 L7.5 7 V13 Z M16.2 10 L12.5 7 V13 Z" fill="#1a6ad0"/></svg>
<svg class="r" style="left:503px;top:698px" width="22" height="21" viewBox="0 0 22 21"><path d="M5 5 L15 2 L19 14 L16 18 L8 19 Z" fill="#a8dcd8" stroke="#d8f0f0" stroke-width="0.6"/><path d="M5 5 L8 19 L4 18 L2 8 Z" fill="#5aa8b0"/><path d="M9 6 L15 4 L17 12 L10 14 Z" fill="#c8f0ec" opacity="0.7"/></svg>
<svg class="r" style="left:1008px;top:703px" width="15" height="14" viewBox="0 0 15 14"><rect x="0.5" y="0.5" width="14" height="13" rx="2" fill="#3a9ae8" stroke="#cde" stroke-width="0.6"/><ellipse cx="7.5" cy="7" rx="5" ry="3.5" fill="#fff"/><rect x="3" y="10" width="9" height="3" fill="#6ad050"/></svg>
<svg class="r" style="left:1024.75px;top:703px" width="13" height="13" viewBox="0 0 13 13"><path d="M3 1 L6.5 3.2 L3 5.5 L-0.5 3.2 Z M10 1 L13.5 3.2 L10 5.5 L6.5 3.2 Z M3 5.5 L6.5 7.8 L3 10 L-0.5 7.8 Z M10 5.5 L13.5 7.8 L10 10 L6.5 7.8 Z" fill="#eee" transform="translate(0,1)"/><circle cx="10.5" cy="10.5" r="2.5" fill="#40c040"/></svg>
<svg class="r" style="left:1042.25px;top:703px" width="8" height="14" viewBox="0 0 8 14"><path d="M1 4 L6 9 L3.5 11.5 V2.5 L6 5 L1 10" stroke="#6a9ae8" stroke-width="1.2" fill="none"/></svg>
<svg class="r" style="left:1056.5px;top:704px" width="13" height="13" viewBox="0 0 13 13"><circle cx="6.5" cy="6.5" r="5.5" fill="none" stroke="#ccc" stroke-width="1.5"/><circle cx="6.5" cy="6.5" r="2.5" fill="none" stroke="#ccc" stroke-width="1.2"/></svg>
<svg class="r" style="left:1071.75px;top:704px" width="14" height="11" viewBox="0 0 14 11"><path d="M1 3 Q7 0 13 3 V9 Q7 12 1 9 Z" fill="#76b900"/><ellipse cx="7" cy="6" rx="3.5" ry="2.3" fill="#2a4a00"/></svg>
<svg class="r" style="left:1087.5px;top:703px" width="14" height="14" viewBox="0 0 14 14"><path d="M2 12 L7 2 L12 12 M4 8 H10" stroke="#ddd" stroke-width="1.3" fill="none"/><circle cx="10" cy="11" r="2" fill="#ddd"/></svg>
<svg class="r" style="left:1102px;top:704px" width="16" height="11" viewBox="0 0 16 11"><path d="M1 2 Q8 -1 15 2 L13 6 Q8 4 3 6 Z M4 7 Q8 5.5 12 7 L10 10 Q8 9 6 10 Z" fill="#c8d8f0"/></svg>
<svg class="r" style="left:1120px;top:703px" width="14" height="14" viewBox="0 0 14 14"><rect x="0.5" y="0.5" width="13" height="13" fill="#60b8e8" stroke="#bde" stroke-width="0.6"/><path d="M4 4 h6 v3 h-6 v3 h6" stroke="#fff" fill="none"/></svg>
<svg class="r" style="left:1135.5px;top:703px" width="15" height="14" viewBox="0 0 15 14"><rect x="0.5" y="0.5" width="14" height="10" fill="#8a8ab8" stroke="#ccd" stroke-width="0.6"/><rect x="4" y="11" width="7" height="2.5" fill="#aaa"/></svg>
<svg class="r" style="left:1152.75px;top:703px" width="13" height="14" viewBox="0 0 13 14"><path d="M2 1 V13" stroke="#eee" stroke-width="1.2"/><path d="M2.5 1.5 H11 L9 4.5 L11 7.5 H2.5 Z" fill="#eee"/></svg>
<svg class="r" style="left:1167.75px;top:703px" width="12" height="14" viewBox="0 0 12 14"><rect x="1" y="3" width="9" height="10" fill="#ddd"/><rect x="3" y="1" width="5" height="3" fill="#ddd"/><path d="M3 7 h5 M3 9 h5" stroke="#444"/></svg>
<svg class="r" style="left:1183.5px;top:703px" width="14" height="13" viewBox="0 0 14 13"><rect x="1" y="9" width="2" height="3" fill="#eee"/><rect x="4" y="7" width="2" height="5" fill="#eee"/><rect x="7" y="5" width="2" height="7" fill="#eee"/><rect x="10" y="2" width="2" height="10" fill="#eee"/></svg>
<svg class="r" style="left:1200.25px;top:703px" width="13" height="13" viewBox="0 0 13 13"><path d="M1 5 H4 L7 2 V11 L4 8 H1 Z" fill="#eee"/><path d="M9 4 Q11 6.5 9 9 M10.5 2.5 Q13.5 6.5 10.5 10.5" stroke="#eee" fill="none"/></svg>
<div class="t" style="left:1043.5px;width:400px;text-align:center;transform-origin:50% 50%;top:699.94px;font-size:8.76px;line-height:10.51px;color:#f0f0f0;font-weight:400;transform:scaleX(0.8333);">13:20</div>
<div class="t" style="left:1043.3px;width:400px;text-align:center;transform-origin:50% 50%;top:710.77px;font-size:8.88px;line-height:10.66px;color:#f0f0f0;font-weight:400;transform:scaleX(0.8333);">14/07/2017</div>
<div class="r" style="left:1271px;top:697px;width:9px;height:23px;background:linear-gradient(90deg,#2a2c34,#5a5c64);border-left:1px solid #6a6a6a;box-sizing:border-box;"></div>
</body></html>
